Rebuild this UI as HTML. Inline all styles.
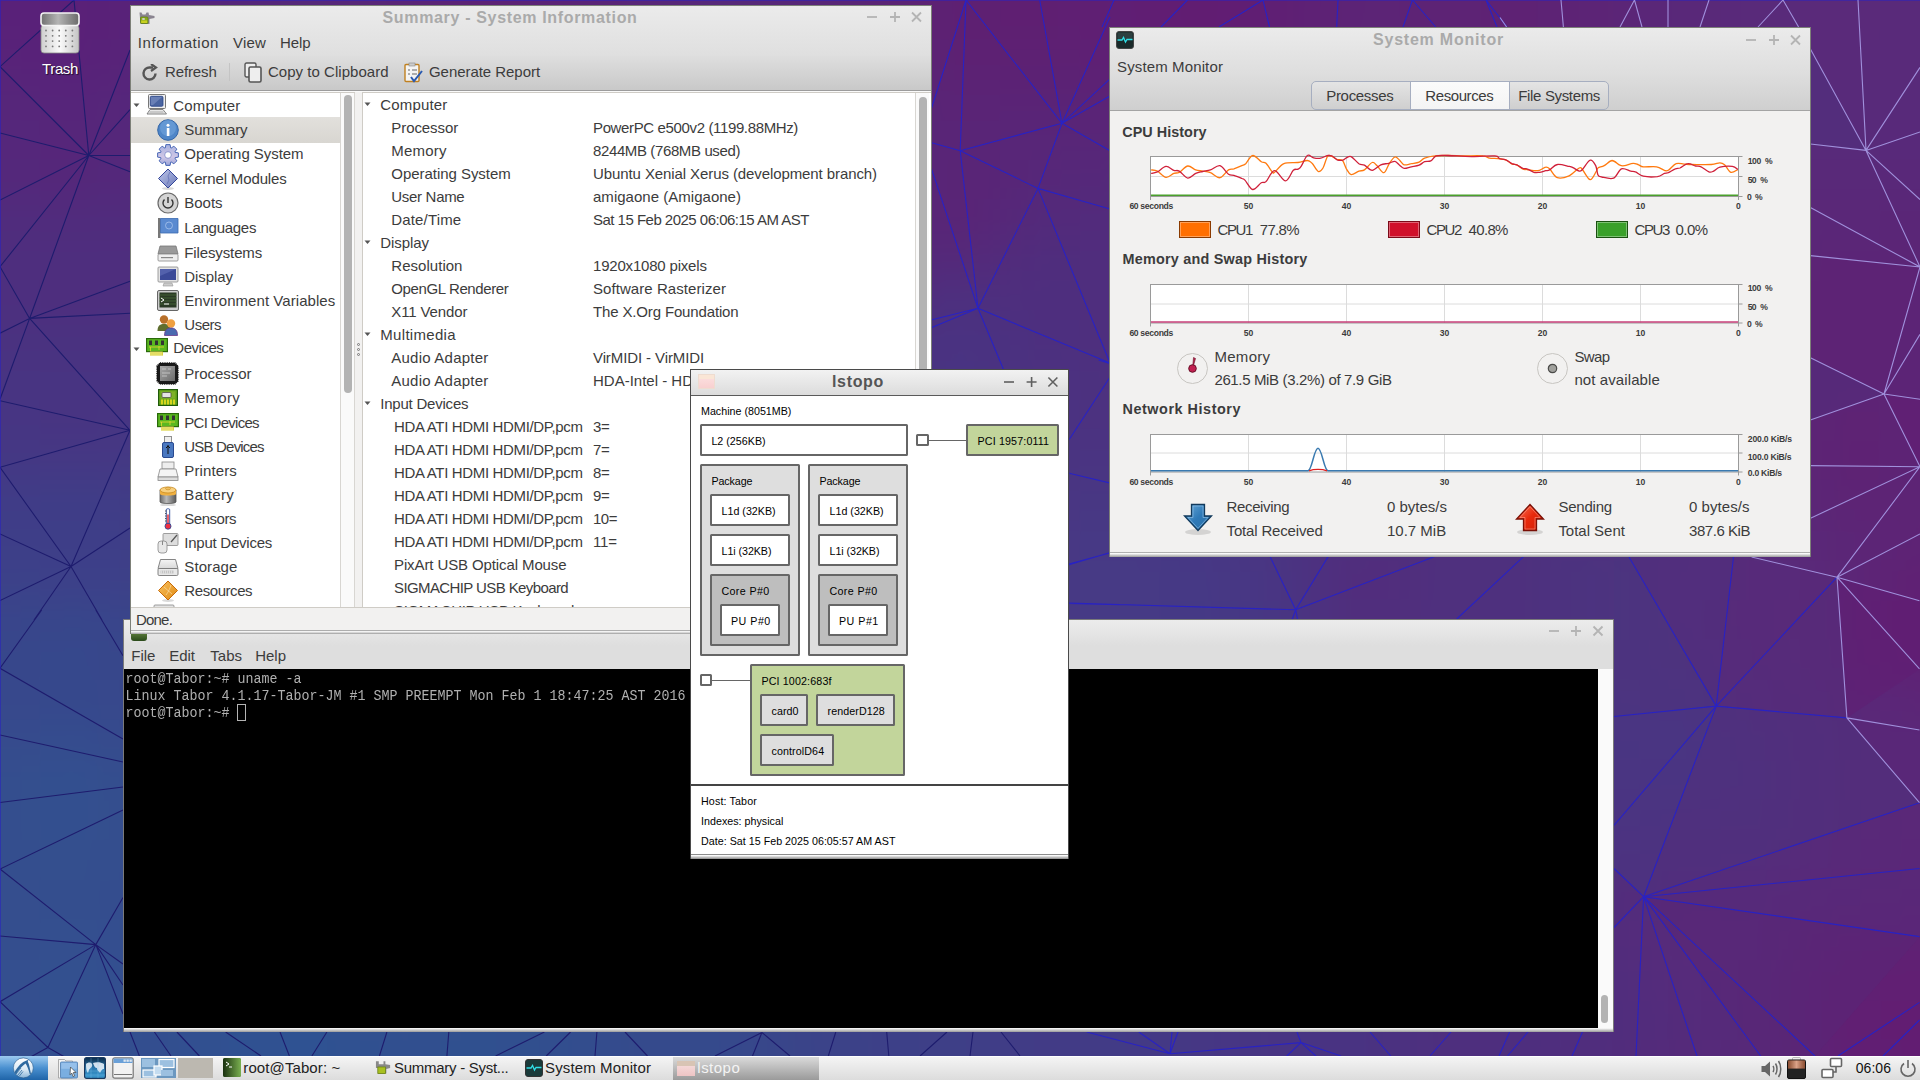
<!DOCTYPE html><html><head><meta charset="utf-8"><title>Desktop</title><style>*{margin:0;padding:0}
html,body{width:1920px;height:1080px;overflow:hidden;background:#3d3f86}
.a{position:absolute}
.t{position:absolute;white-space:nowrap}
</style></head><body><div class="a" style="left:-80px;top:-80px;width:2080px;height:1240px;filter:blur(18px)"><div style="position:absolute;left:0;top:0px;width:2080px;height:40px;background:linear-gradient(90deg,#55267a 0px,#582379 80px,#592279 160px,#57247a 240px,#55277b 320px,#56277a 400px,#592578 480px,#5b2376 560px,#5b2377 640px,#582678 720px,#562879 800px,#572778 880px,#5a2476 960px,#5d2173 1040px,#5e2073 1120px,#5e2074 1200px,#601e73 1280px,#5e2074 1360px,#5c2376 1440px,#5d2375 1520px,#5d2375 1600px,#5b2576 1680px,#592879 1760px,#592a7a 1840px,#5a2a7a 1920px,#592a7a 2000px,#592a7a 2080px)"></div><div style="position:absolute;left:0;top:40px;width:2080px;height:40px;background:linear-gradient(90deg,#56257a 0px,#592279 80px,#5a2178 160px,#572479 240px,#55277b 320px,#56277a 400px,#592478 480px,#5c2276 560px,#5b2376 640px,#582678 720px,#562879 800px,#572778 880px,#5b2376 960px,#5e2073 1040px,#5e2073 1120px,#5f1f73 1200px,#621c72 1280px,#5f1f74 1360px,#5c2376 1440px,#5d2375 1520px,#5e2274 1600px,#5c2476 1680px,#592879 1760px,#592a7a 1840px,#5a2a7a 1920px,#592a7a 2000px,#592a7a 2080px)"></div><div style="position:absolute;left:0;top:80px;width:2080px;height:40px;background:linear-gradient(90deg,#55267a 0px,#592179 80px,#5a2078 160px,#572479 240px,#55277b 320px,#55287a 400px,#592578 480px,#5c2276 560px,#5b2377 640px,#582679 720px,#56287a 800px,#572778 880px,#5a2476 960px,#5e2072 1040px,#5f1f72 1120px,#5f1f74 1200px,#621c72 1280px,#5f1f74 1360px,#5c2476 1440px,#5d2375 1520px,#5e2274 1600px,#5c2476 1680px,#592879 1760px,#592a7a 1840px,#5a2a7a 1920px,#592a7a 2000px,#592a7a 2080px)"></div><div style="position:absolute;left:0;top:120px;width:2080px;height:40px;background:linear-gradient(90deg,#55277b 0px,#582379 80px,#592179 160px,#56257a 240px,#54287b 320px,#54297b 400px,#582678 480px,#5b2377 560px,#5a2477 640px,#572779 720px,#55297a 800px,#562879 880px,#592576 960px,#5d2173 1040px,#5d2173 1120px,#5e2074 1200px,#611d73 1280px,#5e2075 1360px,#5b2477 1440px,#5d2375 1520px,#5d2374 1600px,#5b2576 1680px,#592879 1760px,#592a7a 1840px,#592a7a 1920px,#592a7a 2000px,#592a7a 2080px)"></div><div style="position:absolute;left:0;top:160px;width:2080px;height:40px;background:linear-gradient(90deg,#54287b 0px,#56267a 80px,#56257a 160px,#55277b 240px,#53297c 320px,#532a7b 400px,#56277a 480px,#592578 560px,#582678 640px,#55287a 720px,#542a7a 800px,#552879 880px,#582677 960px,#5a2476 1040px,#5a2376 1120px,#5b2376 1200px,#5d2175 1280px,#5b2376 1360px,#592678 1440px,#5b2576 1520px,#5c2476 1600px,#5a2677 1680px,#592979 1760px,#592a7a 1840px,#582a7a 1920px,#582a7a 2000px,#592979 2080px)"></div><div style="position:absolute;left:0;top:200px;width:2080px;height:40px;background:linear-gradient(90deg,#53297c 0px,#55277b 80px,#56267a 160px,#54287b 240px,#522a7c 320px,#522b7c 400px,#54297b 480px,#56287a 560px,#55287a 640px,#542a7b 720px,#532a7b 800px,#55297a 880px,#572678 960px,#592577 1040px,#582678 1120px,#582678 1200px,#592578 1280px,#582679 1360px,#572879 1440px,#592778 1520px,#592677 1600px,#592878 1680px,#582979 1760px,#582979 1840px,#582a7a 1920px,#58297a 2000px,#592979 2080px)"></div><div style="position:absolute;left:0;top:240px;width:2080px;height:40px;background:linear-gradient(90deg,#512b7d 0px,#54287b 80px,#55277a 160px,#522a7c 240px,#512c7d 320px,#512c7d 400px,#532a7b 480px,#54297b 560px,#54297b 640px,#532b7c 720px,#522b7c 800px,#542a7b 880px,#572778 960px,#5a2476 1040px,#562779 1120px,#54297a 1200px,#56287a 1280px,#56297a 1360px,#56297a 1440px,#57297a 1520px,#572879 1600px,#572979 1680px,#582979 1760px,#592979 1840px,#592979 1920px,#592879 2000px,#592879 2080px)"></div><div style="position:absolute;left:0;top:280px;width:2080px;height:40px;background:linear-gradient(90deg,#4f2d7e 0px,#502c7d 80px,#502c7d 160px,#502c7d 240px,#4f2d7e 320px,#502d7d 400px,#522b7c 480px,#54297b 560px,#542a7b 640px,#522c7c 720px,#512c7d 800px,#522b7b 880px,#562879 960px,#5a2476 1040px,#532a7b 1120px,#522b7c 1200px,#542a7b 1280px,#552a7c 1360px,#552a7b 1440px,#552a7b 1520px,#562a7a 1600px,#562a7a 1680px,#572979 1760px,#592879 1840px,#5a2778 1920px,#5a2677 2000px,#5a2778 2080px)"></div><div style="position:absolute;left:0;top:320px;width:2080px;height:40px;background:linear-gradient(90deg,#4e2f7f 0px,#4e2e7e 80px,#4e2e7e 160px,#4e2e7e 240px,#4e2f7e 320px,#4f2e7e 400px,#522b7c 480px,#55287a 560px,#54297b 640px,#512c7d 720px,#502d7d 800px,#512d7d 880px,#532a7b 960px,#55297a 1040px,#4f2d7d 1120px,#502d7d 1200px,#532b7c 1280px,#552a7c 1360px,#552a7c 1440px,#542b7b 1520px,#552b7b 1600px,#562a7a 1680px,#572979 1760px,#592778 1840px,#5b2577 1920px,#5b2576 2000px,#5a2678 2080px)"></div><div style="position:absolute;left:0;top:360px;width:2080px;height:40px;background:linear-gradient(90deg,#4c3080 0px,#4d2f7f 80px,#4e2e7e 160px,#4c307f 240px,#4c307f 320px,#4e2f7e 400px,#522b7c 480px,#55287a 560px,#54297b 640px,#502d7d 720px,#4e2f7e 800px,#4f2e7e 880px,#4f2e7d 960px,#4d307f 1040px,#4e2e7e 1120px,#4f2e7e 1200px,#522c7d 1280px,#552a7c 1360px,#542b7c 1440px,#532c7c 1520px,#542c7c 1600px,#552b7b 1680px,#572a7a 1760px,#592778 1840px,#5c2476 1920px,#5c2476 2000px,#5a2677 2080px)"></div><div style="position:absolute;left:0;top:400px;width:2080px;height:40px;background:linear-gradient(90deg,#4a3281 0px,#4a3280 80px,#4a3280 160px,#4a3280 240px,#4b3280 320px,#4d307f 400px,#512c7c 480px,#54297a 560px,#532a7b 640px,#4e2f7f 720px,#4c3080 800px,#4d307f 880px,#4d307f 960px,#493382 1040px,#4d2f7f 1120px,#4e2f7e 1200px,#512d7d 1280px,#542a7c 1360px,#542b7c 1440px,#522d7c 1520px,#532d7c 1600px,#542c7b 1680px,#562a7a 1760px,#592778 1840px,#5c2576 1920px,#5c2476 2000px,#5b2677 2080px)"></div><div style="position:absolute;left:0;top:440px;width:2080px;height:40px;background:linear-gradient(90deg,#483482 0px,#483482 80px,#483482 160px,#483482 240px,#493481 320px,#4b3280 400px,#4f2e7e 480px,#522b7c 560px,#512c7d 640px,#4c3180 720px,#4a3282 800px,#4b3180 880px,#4b3180 960px,#483482 1040px,#4b3280 1120px,#4d307f 1200px,#4f2f7e 1280px,#522c7d 1360px,#522d7d 1440px,#512d7d 1520px,#522e7d 1600px,#532d7c 1680px,#562b7a 1760px,#592778 1840px,#5c2476 1920px,#5c2476 2000px,#5b2677 2080px)"></div><div style="position:absolute;left:0;top:480px;width:2080px;height:40px;background:linear-gradient(90deg,#463683 0px,#473583 80px,#483482 160px,#473683 240px,#473683 320px,#493581 400px,#4c317f 480px,#4f2e7e 560px,#4d307f 640px,#493383 720px,#483484 800px,#4a3382 880px,#4b3281 960px,#493381 1040px,#4b3281 1120px,#4c3280 1200px,#4d3180 1280px,#502f7e 1360px,#502e7e 1440px,#502e7d 1520px,#512e7d 1600px,#522e7c 1680px,#552c7b 1760px,#592778 1840px,#5e2374 1920px,#5d2475 2000px,#5b2677 2080px)"></div><div style="position:absolute;left:0;top:520px;width:2080px;height:40px;background:linear-gradient(90deg,#443984 0px,#443884 80px,#453884 160px,#443984 240px,#453884 320px,#463783 400px,#493581 480px,#4b3280 560px,#4a3381 640px,#473484 720px,#463585 800px,#493483 880px,#4a3381 960px,#4a3381 1040px,#4a3481 1120px,#4a3482 1200px,#4b3381 1280px,#4d3180 1360px,#4f2f7e 1440px,#502f7e 1520px,#502f7d 1600px,#512f7d 1680px,#542d7b 1760px,#592878 1840px,#5e2274 1920px,#5d2375 2000px,#5b2577 2080px)"></div><div style="position:absolute;left:0;top:560px;width:2080px;height:40px;background:linear-gradient(90deg,#423b86 0px,#403c87 80px,#3f3d87 160px,#413c86 240px,#433b85 320px,#443a84 400px,#453883 480px,#473682 560px,#483583 640px,#463585 720px,#463585 800px,#483483 880px,#4a3382 960px,#4a3482 1040px,#493683 1120px,#483783 1200px,#493683 1280px,#4c3280 1360px,#4f2f7e 1440px,#4f2f7e 1520px,#4f307e 1600px,#50307e 1680px,#532f7c 1760px,#582a79 1840px,#5d2475 1920px,#5d2475 2000px,#5b2577 2080px)"></div><div style="position:absolute;left:0;top:600px;width:2080px;height:40px;background:linear-gradient(90deg,#3f3e87 0px,#3e3e88 80px,#3e3e88 160px,#3f3e87 240px,#413d86 320px,#413d86 400px,#423c85 480px,#443984 560px,#463684 640px,#463584 720px,#463585 800px,#483583 880px,#493482 960px,#493582 1040px,#483884 1120px,#473985 1200px,#473784 1280px,#4b3481 1360px,#502e7d 1440px,#4f2f7e 1520px,#4e307e 1600px,#4d327f 1680px,#52307d 1760px,#572c7a 1840px,#5b2677 1920px,#5e2375 2000px,#5c2576 2080px)"></div><div style="position:absolute;left:0;top:640px;width:2080px;height:40px;background:linear-gradient(90deg,#3e4088 0px,#3c4189 80px,#3d4089 160px,#3d4088 240px,#3f3f87 320px,#3f3f87 400px,#3f4087 480px,#413d86 560px,#453884 640px,#463684 720px,#463584 800px,#483583 880px,#493582 960px,#493683 1040px,#473984 1120px,#473a85 1200px,#463985 1280px,#493583 1360px,#522c7c 1440px,#4f307e 1520px,#4e307e 1600px,#4b3480 1680px,#54307c 1760px,#572c7b 1840px,#5b2778 1920px,#602073 2000px,#5d2476 2080px)"></div><div style="position:absolute;left:0;top:680px;width:2080px;height:40px;background:linear-gradient(90deg,#3c4289 0px,#39458b 80px,#37478b 160px,#3b438a 240px,#3d4188 320px,#3d4288 400px,#3c4388 480px,#3e4087 560px,#433b85 640px,#453784 720px,#463684 800px,#473683 880px,#483683 960px,#483783 1040px,#473984 1120px,#463a85 1200px,#453985 1280px,#483683 1360px,#512d7c 1440px,#4f307e 1520px,#4e307e 1600px,#4b3480 1680px,#54307c 1760px,#582b7a 1840px,#5b2778 1920px,#621e72 2000px,#5d2476 2080px)"></div><div style="position:absolute;left:0;top:720px;width:2080px;height:40px;background:linear-gradient(90deg,#3a448a 0px,#37478b 80px,#36488c 160px,#39458a 240px,#3c4389 320px,#3b4388 400px,#3a4589 480px,#3c4288 560px,#413d86 640px,#443985 720px,#463784 800px,#473783 880px,#483683 960px,#483783 1040px,#473884 1120px,#463985 1200px,#463884 1280px,#4a3482 1360px,#4f2f7e 1440px,#4f307e 1520px,#4e317e 1600px,#4d337f 1680px,#51317d 1760px,#572c7b 1840px,#5b2778 1920px,#602074 2000px,#5c2476 2080px)"></div><div style="position:absolute;left:0;top:760px;width:2080px;height:40px;background:linear-gradient(90deg,#39468b 0px,#37488c 80px,#36488c 160px,#38478b 240px,#3b4489 320px,#3b4489 400px,#3a4589 480px,#3b4388 560px,#403f87 640px,#433b85 720px,#453984 800px,#463884 880px,#473783 960px,#483783 1040px,#473884 1120px,#473884 1200px,#483783 1280px,#4a3482 1360px,#4d317f 1440px,#4e307f 1520px,#4e317f 1600px,#4d3380 1680px,#4f327f 1760px,#542d7c 1840px,#592979 1920px,#5c2577 2000px,#5b2677 2080px)"></div><div style="position:absolute;left:0;top:800px;width:2080px;height:40px;background:linear-gradient(90deg,#38488b 0px,#364b8d 80px,#354c8e 160px,#37498c 240px,#3a458a 320px,#3b4489 400px,#3a4589 480px,#3b4389 560px,#3f4087 640px,#413d86 720px,#433b85 800px,#453984 880px,#463884 960px,#473783 1040px,#483783 1120px,#483783 1200px,#483683 1280px,#4a3482 1360px,#4c3280 1440px,#4e317f 1520px,#4e317f 1600px,#4b3481 1680px,#4c3381 1760px,#512f7d 1840px,#582979 1920px,#5a2878 2000px,#5a2778 2080px)"></div><div style="position:absolute;left:0;top:840px;width:2080px;height:40px;background:linear-gradient(90deg,#37498c 0px,#344e8e 80px,#33508f 160px,#364b8d 240px,#39478b 320px,#3a4589 400px,#3a4589 480px,#3b4389 560px,#3e4188 640px,#403f87 720px,#423c86 800px,#433b85 880px,#453984 960px,#463884 1040px,#473783 1120px,#483683 1200px,#493582 1280px,#493482 1360px,#4b3381 1440px,#4d317f 1520px,#4e317f 1600px,#4c3381 1680px,#4d3280 1760px,#50307e 1840px,#592979 1920px,#5a2878 2000px,#592878 2080px)"></div><div style="position:absolute;left:0;top:880px;width:2080px;height:40px;background:linear-gradient(90deg,#374a8c 0px,#344e8e 80px,#33508f 160px,#364c8d 240px,#38488b 320px,#39468a 400px,#3a458a 480px,#3b4489 560px,#3c4389 640px,#3e4188 720px,#403e87 800px,#423c86 880px,#443a85 960px,#453984 1040px,#473783 1120px,#483683 1200px,#493482 1280px,#483483 1360px,#493382 1440px,#4d3180 1520px,#4f307f 1600px,#4e317f 1680px,#50307e 1760px,#512f7d 1840px,#582979 1920px,#5a2878 2000px,#592778 2080px)"></div><div style="position:absolute;left:0;top:920px;width:2080px;height:40px;background:linear-gradient(90deg,#374b8d 0px,#344e8e 80px,#344f8e 160px,#354c8d 240px,#37498c 320px,#38488b 400px,#39478b 480px,#39468a 560px,#3a458a 640px,#3c4389 720px,#3e4188 800px,#403e87 880px,#423c85 960px,#443a85 1040px,#463884 1120px,#473683 1200px,#483483 1280px,#483483 1360px,#493382 1440px,#4d3180 1520px,#4f2f7e 1600px,#502f7e 1680px,#532d7c 1760px,#542d7c 1840px,#582979 1920px,#5a2778 2000px,#5a2778 2080px)"></div><div style="position:absolute;left:0;top:960px;width:2080px;height:40px;background:linear-gradient(90deg,#364b8d 0px,#354e8e 80px,#344e8e 160px,#354c8e 240px,#354b8d 320px,#364b8d 400px,#36498c 480px,#37498c 560px,#38478b 640px,#3a458a 720px,#3b4389 800px,#3e4087 880px,#403d86 960px,#433b85 1040px,#453984 1120px,#463784 1200px,#483583 1280px,#483483 1360px,#4a3382 1440px,#4d307f 1520px,#4f2f7e 1600px,#512d7d 1680px,#562b7b 1760px,#562a7a 1840px,#5a2778 1920px,#5c2576 2000px,#5b2577 2080px)"></div><div style="position:absolute;left:0;top:1000px;width:2080px;height:40px;background:linear-gradient(90deg,#364c8d 0px,#344e8e 80px,#344f8f 160px,#344d8e 240px,#344d8f 320px,#334e8f 400px,#344c8e 480px,#344c8d 560px,#354a8c 640px,#38478b 720px,#39468a 800px,#3d4288 880px,#3f3f87 960px,#413c86 1040px,#443a85 1120px,#453884 1200px,#483583 1280px,#493482 1360px,#4a3381 1440px,#4d307f 1520px,#4f2e7e 1600px,#512d7d 1680px,#582a7a 1760px,#572a7a 1840px,#5d2375 1920px,#5f2174 2000px,#5d2376 2080px)"></div><div style="position:absolute;left:0;top:1040px;width:2080px;height:40px;background:linear-gradient(90deg,#364c8d 0px,#344f8f 80px,#33508f 160px,#344e8f 240px,#324f90 320px,#315091 400px,#334e8f 480px,#324e8e 560px,#334c8d 640px,#36498b 720px,#37488b 800px,#3b4389 880px,#3e4088 960px,#3f3e87 1040px,#433b86 1120px,#433a85 1200px,#473683 1280px,#483483 1360px,#4a3382 1440px,#4d2f7f 1520px,#4f2e7e 1600px,#4f2e7e 1680px,#562b7b 1760px,#572979 1840px,#602073 1920px,#611f73 2000px,#5e2275 2080px)"></div><div style="position:absolute;left:0;top:1080px;width:2080px;height:40px;background:linear-gradient(90deg,#364c8d 0px,#334f8f 80px,#33508f 160px,#334e8f 240px,#305191 320px,#2f5292 400px,#324f8f 480px,#30508f 560px,#324e8e 640px,#364a8c 720px,#354a8c 800px,#3b4489 880px,#3d4088 960px,#3e3f87 1040px,#423b86 1120px,#423b86 1200px,#463784 1280px,#483483 1360px,#493382 1440px,#4e2f7f 1520px,#4e2e7e 1600px,#4f2e7e 1680px,#542b7b 1760px,#572979 1840px,#611f73 1920px,#621e72 2000px,#5f2174 2080px)"></div><div style="position:absolute;left:0;top:1120px;width:2080px;height:40px;background:linear-gradient(90deg,#364c8d 0px,#344f8e 80px,#334f8f 160px,#334e8f 240px,#305191 320px,#2f5292 400px,#314f8f 480px,#30508f 560px,#324e8e 640px,#354a8c 720px,#354a8c 800px,#3a4489 880px,#3d4088 960px,#3e3f87 1040px,#423b86 1120px,#423b86 1200px,#463784 1280px,#483483 1360px,#493382 1440px,#4e2f7e 1520px,#4e2e7e 1600px,#502d7d 1680px,#552a7a 1760px,#572979 1840px,#602074 1920px,#621e72 2000px,#5f2174 2080px)"></div><div style="position:absolute;left:0;top:1160px;width:2080px;height:40px;background:linear-gradient(90deg,#364b8d 0px,#354e8e 80px,#344e8e 160px,#344e8f 240px,#315091 320px,#305191 400px,#324f8f 480px,#314f8f 560px,#324d8e 640px,#36498c 720px,#36498c 800px,#3b4389 880px,#3d4088 960px,#3f3e87 1040px,#423b86 1120px,#433a86 1200px,#463784 1280px,#483483 1360px,#4a3382 1440px,#4e2f7f 1520px,#4e2e7e 1600px,#512d7d 1680px,#542a7b 1760px,#572879 1840px,#5e2275 1920px,#611f73 2000px,#5e2274 2080px)"></div><div style="position:absolute;left:0;top:1200px;width:2080px;height:40px;background:linear-gradient(90deg,#374a8c 0px,#364c8d 80px,#354d8e 160px,#344d8e 240px,#324f90 320px,#314f90 400px,#334e8f 480px,#324d8e 560px,#344c8d 640px,#37498b 720px,#38478b 800px,#3b4389 880px,#3e4088 960px,#403e87 1040px,#433b85 1120px,#443985 1200px,#473683 1280px,#493482 1360px,#4b3281 1440px,#4e2f7f 1520px,#4f2e7e 1600px,#512c7c 1680px,#542b7b 1760px,#572879 1840px,#5c2476 1920px,#5f2174 2000px,#5d2375 2080px)"></div></div>
<svg class="a" style="left:0;top:0" width="1920" height="1080" viewBox="0 0 1920 1080"><path d="M1614.0 557.0L1629.0 557.0L1716.2 706.1L1614.0 716.5Z" fill="#4a3580" opacity=".55"/><path d="M1733.5 557.0L1837.0 577.2L1716.2 706.1Z" fill="#572a7a" opacity=".55"/><path d="M1629.0 557.0L1733.5 557.0L1716.2 706.1Z" fill="#502e7e" opacity=".55"/><path d="M1837.0 577.2L1920.0 600.8L1920.0 668.9L1846.9 717.9Z" fill="#611e72" opacity=".55"/><path d="M1716.2 706.1L1846.9 717.9L1920.0 802.7L1643.6 896.7Z" fill="#4f317e" opacity=".55"/><path d="M1614.0 716.5L1716.2 706.1L1643.6 896.7L1614.0 868.5Z" fill="#483683" opacity=".55"/><path d="M1846.9 717.9L1920.0 730.0L1920.0 802.7Z" fill="#5a2678" opacity=".55"/><path d="M1716.2 706.1L1837.0 577.2L1846.9 717.9Z" fill="#552c7a" opacity=".55"/><path d="M1643.6 896.7L1920.0 868.5L1920.0 936.6Z" fill="#572a7a" opacity=".55"/><path d="M1643.6 896.7L1920.0 936.6L1815.0 1056.0L1760.7 1056.0Z" fill="#5a2676" opacity=".55"/><path d="M1838.0 1056.0L1920.0 1002.4L1920.0 1056.0Z" fill="#621e72" opacity=".55"/><path d="M1810.4 49.0L1866.0 150.4L1810.4 144.0Z" fill="#50307e" opacity=".55"/><path d="M1810.4 255.6L1920.0 267.0L1884.0 394.0L1810.4 357.8Z" fill="#5e2274" opacity=".55"/><path d="M1810.4 357.8L1884.0 394.0L1810.4 420.0Z" fill="#522e7c" opacity=".55"/><path d="M1884.0 394.0L1920.0 399.3L1920.0 466.7Z" fill="#621e72" opacity=".55"/>
<path d="M88.8 155.5L0.0 66.7M88.8 155.5L0.0 133.0M88.8 155.5L0.0 200.0M88.8 155.5L0.0 266.7M88.8 155.5L29.6 318.5M88.8 155.5L74.0 0.0M88.8 155.5L130.0 109.6M88.8 155.5L130.0 50.0M88.8 155.5L130.0 155.5M88.8 155.5L130.0 171.8M0.0 66.7L74.0 0.0M29.6 318.4L0.0 266.7M29.6 318.4L0.0 333.2M29.6 318.4L0.0 399.2M29.6 318.4L130.0 430.3M29.6 318.4L130.0 313.3M29.6 318.4L130.0 281.3M0.0 400.7L130.0 430.3M130.0 430.3L0.0 467.3M41.7 610.0L0.0 668.3M95.8 610.0L123.0 655.8M0.0 668.3L123.0 739.0M0.0 735.0L123.0 762.0M0.0 802.5L123.0 787.0M0.0 869.0L123.0 810.0M95.8 944.6L0.0 869.0M95.8 944.6L0.0 936.0M95.8 944.6L0.0 1001.7M95.8 944.6L47.9 1047.5M95.8 944.6L123.0 897.5M95.8 944.6L123.0 964.0M95.8 944.6L123.0 985.0M95.8 944.6L123.0 1014.0M0.0 1001.7L47.9 1047.5M47.9 1047.5L25.0 1060.0M47.9 1047.5L70.0 1060.0M71.0 566.5L0.0 467.3M71.0 566.5L0.0 534.0M71.0 566.5L0.0 600.6M71.0 566.5L130.0 430.3M71.0 566.5L130.0 528.0M71.0 566.5L34.0 620.0M71.0 566.5L102.0 620.0M34.0 620.0L41.7 610.0M102.0 620.0L95.8 610.0M130.0 1032.0L139.4 1056.0M154.4 1032.0L171.0 1056.0M176.9 1032.0L199.4 1056.0M225.6 1032.0L261.0 1056.0M280.0 1032.0L289.4 1056.0M326.9 1032.0L311.9 1056.0M386.9 1032.0L379.4 1056.0M448.8 1032.0L446.9 1056.0M544.4 1032.0L495.6 1056.0M570.6 1032.0L546.2 1056.0M596.9 1032.0L595.0 1056.0M625.0 1032.0L647.5 1056.0M761.9 1032.5L715.0 1056.0M761.9 1032.5L752.5 1056.0M761.9 1032.5L790.0 1056.0M835.8 1032.0L828.3 1056.0M886.7 1032.0L888.8 1056.0M947.0 1032.0L920.0 1056.0M973.0 1032.0L970.0 1056.0M1001.0 1032.0L1020.0 1056.0" stroke="#1e1c6e" stroke-width="1.1" fill="none" opacity="1"/>
<path d="M0.0 0.0L1920.0 0.0M0.0 0.0L0.0 1080.0M966.0 0.0L1062.0 123.3M966.0 0.0L960.2 150.7M930.0 113.0L966.0 0.0M1039.7 0.0L1062.0 123.3M1110.0 17.0L1062.0 123.3M1062.0 123.3L1110.0 78.8M1062.0 123.3L1110.0 96.0M1062.0 123.3L1110.0 150.7M1062.0 123.3L960.2 150.7M1062.0 123.3L1038.0 188.4M960.2 150.7L930.0 142.2M960.2 150.7L1038.0 188.4M960.2 150.7L978.0 308.3M930.0 164.4L978.0 308.3M1038.0 188.4L978.0 308.3M1038.0 188.4L1110.0 209.0M1038.0 188.4L1110.0 363.0M978.0 308.3L930.0 320.3M978.0 308.3L930.0 328.2M978.0 308.3L1003.7 370.0M978.0 308.3L1110.0 363.0M1114.0 0.0L1102.0 27.0M1187.5 0.0L1161.0 27.0M1263.0 0.0L1219.0 27.0M1263.0 0.0L1269.5 27.0M1338.0 0.0L1336.7 27.0M1412.4 0.0L1403.0 27.0M1412.4 0.0L1435.8 27.0M1486.0 0.0L1497.0 27.0M1486.0 0.0L1507.0 27.0M1109.4 378.0L1069.2 439.5M1069.2 473.3L1109.4 482.9M1069.0 564.8L1109.4 552.8M1069.0 603.4L1120.0 604.6M1098.6 360.0L1109.4 363.6M1295.7 609.8L1270.0 556.4M1295.7 609.8L1328.3 556.4M1295.7 609.8L1434.8 556.4M1295.7 609.8L1068.8 603.0M1295.7 609.8L1292.0 620.0M1295.7 609.8L1297.7 620.0M1068.8 564.0L1109.6 553.0M1523.8 556.4L1456.7 619.0M1170.0 1053.8L1086.7 1032.0M1170.0 1053.8L1138.8 1032.0M1170.0 1053.8L1172.0 1032.0M1170.0 1053.8L1178.0 1032.0M1170.0 1053.8L1301.0 1042.6M1301.0 1042.6L1297.0 1032.0M1301.0 1042.6L1286.7 1056.0M1301.0 1042.6L1316.0 1056.0M1301.0 1042.6L1341.0 1056.0M1370.0 1032.0L1390.8 1056.0M1451.0 1032.0L1430.0 1056.0M1509.6 1032.0L1499.0 1056.0M1528.0 1032.0L1507.5 1056.0M1582.5 1032.0L1572.0 1056.0M1629.0 557.0L1716.2 706.1M1733.5 557.0L1716.2 706.1M1716.2 706.1L1614.0 716.5M1716.2 706.1L1614.0 825.4M1716.2 706.1L1643.6 896.7M1643.6 896.7L1614.0 868.5M1643.6 896.7L1614.0 927.5M1643.6 896.7L1636.0 1056.0M1643.6 896.7L1697.0 1056.0M1643.6 896.7L1760.7 1056.0M1716.2 706.1L1837.0 577.2M1643.6 896.7L1815.0 1056.0M1838.0 1056.0L1919.5 1002.4M1883.0 1056.0L1919.5 1020.0M1643.6 896.7L1919.5 802.7M1643.6 896.7L1919.5 868.5M1643.6 896.7L1919.5 936.6M1716.2 706.1L1846.9 717.9" stroke="#2822c4" stroke-width="1.1" fill="none" opacity="1"/>
<path d="M1561.0 0.0L1563.4 27.0M1634.5 0.0L1620.0 27.0M1634.5 0.0L1642.0 27.0M1668.0 0.0L1668.0 27.0M1709.0 0.0L1700.0 27.0M1783.0 0.0L1758.0 27.0M1783.0 0.0L1798.6 27.0M1858.0 0.0L1866.0 150.4M1866.0 150.4L1810.4 49.0M1866.0 150.4L1810.4 144.0M1866.0 150.4L1920.0 67.4M1866.0 150.4L1920.0 132.0M1866.0 150.4L1920.0 199.6M1866.0 150.4L1920.0 267.0M1810.4 207.4L1920.0 267.0M1810.4 255.6L1920.0 267.0M1920.0 267.0L1884.0 394.0M1884.0 394.0L1810.4 357.8M1884.0 394.0L1810.4 420.0M1884.0 394.0L1920.0 334.4M1884.0 394.0L1920.0 399.3M1884.0 394.0L1920.0 466.7M1920.0 466.7L1810.4 465.6M1920.0 466.7L1810.0 518.5M1920.0 466.7L1837.0 577.2M1920.0 534.0L1837.0 577.2M1500.0 17.5L1506.6 27.0M1751.6 557.0L1837.0 577.2M1837.0 577.2L1919.5 600.8M1837.0 577.2L1846.9 717.9M1837.0 577.2L1919.5 668.9M1846.9 717.9L1919.5 730.0M1846.9 717.9L1919.5 802.7" stroke="#a090dc" stroke-width="1.1" fill="none" opacity="1"/></svg>
<svg class="a" style="left:40px;top:12px" width="40" height="42" viewBox="0 0 40 42"><defs><linearGradient id="tl" x1="0" x2="1"><stop offset="0" stop-color="#707070"/><stop offset=".45" stop-color="#b4b4b4"/><stop offset="1" stop-color="#6a6a6a"/></linearGradient><linearGradient id="tb" x1="0" x2="1"><stop offset="0" stop-color="#cfcfcf"/><stop offset=".5" stop-color="#fafafa"/><stop offset="1" stop-color="#c4c4c4"/></linearGradient></defs><rect x="1" y="13" width="38" height="28" rx="3" fill="url(#tb)" stroke="#888" stroke-width=".8"/><rect x="1" y="1" width="38" height="12.5" rx="3" fill="url(#tl)" stroke="#f4f4f4" stroke-width="1.6"/><circle cx="6.0" cy="18.5" r="0.9" fill="#777"/><circle cx="6.0" cy="23.8" r="0.9" fill="#777"/><circle cx="6.0" cy="29.1" r="0.9" fill="#777"/><circle cx="6.0" cy="34.4" r="0.9" fill="#777"/><circle cx="12.6" cy="18.5" r="0.9" fill="#777"/><circle cx="12.6" cy="23.8" r="0.9" fill="#777"/><circle cx="12.6" cy="29.1" r="0.9" fill="#777"/><circle cx="12.6" cy="34.4" r="0.9" fill="#777"/><circle cx="19.2" cy="18.5" r="0.9" fill="#777"/><circle cx="19.2" cy="23.8" r="0.9" fill="#777"/><circle cx="19.2" cy="29.1" r="0.9" fill="#777"/><circle cx="19.2" cy="34.4" r="0.9" fill="#777"/><circle cx="25.799999999999997" cy="18.5" r="0.9" fill="#777"/><circle cx="25.799999999999997" cy="23.8" r="0.9" fill="#777"/><circle cx="25.799999999999997" cy="29.1" r="0.9" fill="#777"/><circle cx="25.799999999999997" cy="34.4" r="0.9" fill="#777"/><circle cx="32.4" cy="18.5" r="0.9" fill="#777"/><circle cx="32.4" cy="23.8" r="0.9" fill="#777"/><circle cx="32.4" cy="29.1" r="0.9" fill="#777"/><circle cx="32.4" cy="34.4" r="0.9" fill="#777"/></svg>
<div class="t" style="left:42.00px;top:61.05px;font:normal 15px/15px 'Liberation Sans', sans-serif;color:#ffffff;text-shadow:1px 1px 1px rgba(0,0,0,.7);letter-spacing:-0.357px;">Trash</div>
<div class="a" style="left:123px;top:619px;width:1491px;height:413px;background:#dcdcdc;border:1px solid #7a7a7a;box-sizing:border-box;"></div>
<div class="a" style="left:124px;top:620px;width:1489px;height:26px;background:linear-gradient(#ececec,#dedede);"></div>
<div class="a" style="left:124px;top:646px;width:1489px;height:23px;background:#dedede;"></div>
<svg class="a" style="left:1548px;top:625px" width="56" height="12">
<path d="M1 6H11" stroke="#b4b4b4" stroke-width="1.8"/>
<path d="M23 6H33M28 1V11" stroke="#b4b4b4" stroke-width="1.8"/>
<path d="M45.5 1.5L54.5 10.5M54.5 1.5L45.5 10.5" stroke="#b4b4b4" stroke-width="1.8"/>
</svg>
<div class="a" style="left:131px;top:633px;width:16px;height:8px;background:linear-gradient(#5a7a3a,#2a4a1a);border-radius:0 0 3px 3px;"></div>
<div class="t" style="left:131.30px;top:648.30px;font:normal 15px/15px 'Liberation Sans', sans-serif;color:#3c3c3c;">File</div>
<div class="t" style="left:169.20px;top:648.30px;font:normal 15px/15px 'Liberation Sans', sans-serif;color:#3c3c3c;">Edit</div>
<div class="t" style="left:210.30px;top:648.30px;font:normal 15px/15px 'Liberation Sans', sans-serif;color:#3c3c3c;">Tabs</div>
<div class="t" style="left:255.20px;top:648.30px;font:normal 15px/15px 'Liberation Sans', sans-serif;color:#3c3c3c;">Help</div>
<div class="a" style="left:124px;top:669px;width:1474px;height:359px;background:#000;"></div>
<div class="a" style="left:1598px;top:669px;width:15px;height:359px;background:#fafafa;"></div>
<div class="a" style="left:1601px;top:995px;width:7px;height:28px;background:#b3b3b3;border-radius:4px;"></div>
<div class="a" style="left:124px;top:1028px;width:1489px;height:4px;background:linear-gradient(#fff,#9a9a9a);"></div>
<div class="t" style="left:125.60px;top:672.79px;font:normal 13.33px/13.33px 'Liberation Mono', monospace;color:#b0b0b0;transform:scaleY(1.14);transform-origin:0 80%;">root@Tabor:~# uname -a</div>
<div class="t" style="left:125.60px;top:689.79px;font:normal 13.33px/13.33px 'Liberation Mono', monospace;color:#b0b0b0;transform:scaleY(1.14);transform-origin:0 80%;">Linux Tabor 4.1.17-Tabor-JM #1 SMP PREEMPT Mon Feb 1 18:47:25 AST 2016 ppc GNU/Linux</div>
<div class="t" style="left:125.60px;top:706.79px;font:normal 13.33px/13.33px 'Liberation Mono', monospace;color:#b0b0b0;transform:scaleY(1.14);transform-origin:0 80%;">root@Tabor:~# </div>
<div class="a" style="left:236.5px;top:703.5px;width:9px;height:17px;border:1px solid #b4b4b4;box-sizing:border-box;"></div>
<div class="a" style="left:130px;top:5px;width:802px;height:629px;background:#f2f1f0;border:1px solid #7d8078;box-sizing:border-box;"></div>
<div class="a" style="left:131px;top:6px;width:800px;height:54px;background:linear-gradient(#ebebeb,#dedede);"></div>
<div class="a" style="left:131px;top:56px;width:800px;height:35px;background:linear-gradient(#dedede,#c8c8c8);"></div>
<div class="a" style="left:131px;top:90px;width:800px;height:1px;background:#9c9c9c;"></div>
<div class="a" style="left:131px;top:91px;width:800px;height:1px;background:#fafafa;"></div>
<svg class="a" style="left:139px;top:11px" width="16" height="13" viewBox="0 0 16 13"><path d="M0.5 1.5h2l1 2h3l1-2h2l.5 2.5l5.5 1v2l-5 1v5h-9z" fill="#8a8490"/><rect x="1.5" y="6" width="7.5" height="6.5" rx="1" fill="#8aac18" stroke="#5a7a10" stroke-width=".7"/><rect x="2.2" y="9.5" width="6" height="2.5" fill="#c8d020"/><ellipse cx="4.5" cy="8" rx="1.6" ry="1" fill="#ccc"/></svg>
<div class="t" style="left:382.50px;top:10.25px;font:bold 16px/16px 'Liberation Sans', sans-serif;color:#aaaaaa;letter-spacing:0.661px;">Summary - System Information</div>
<svg class="a" style="left:866px;top:11.399999999999999px" width="56.5" height="12">
<path d="M1 6H11" stroke="#b4b4b4" stroke-width="1.8"/>
<path d="M24 6H34M29 1V11" stroke="#b4b4b4" stroke-width="1.8"/>
<path d="M46.0 1.5L55.0 10.5M55.0 1.5L46.0 10.5" stroke="#b4b4b4" stroke-width="1.8"/>
</svg>
<div class="t" style="left:137.80px;top:35.00px;font:normal 15px/15px 'Liberation Sans', sans-serif;color:#3c3c3c;letter-spacing:0.560px;">Information</div>
<div class="t" style="left:233.00px;top:35.00px;font:normal 15px/15px 'Liberation Sans', sans-serif;color:#3c3c3c;letter-spacing:0.190px;">View</div>
<div class="t" style="left:280.00px;top:35.00px;font:normal 15px/15px 'Liberation Sans', sans-serif;color:#3c3c3c;letter-spacing:-0.087px;">Help</div>
<svg class="a" style="left:141px;top:64px" width="18" height="19" viewBox="0 0 18 19"><path d="M14.5 9.5A6 6 0 1 1 9 3.5H12" fill="none" stroke="#555" stroke-width="2.4"/><path d="M10 0L15 3.5L10 7" fill="none" stroke="#555" stroke-width="2.2"/></svg>
<div class="t" style="left:165.00px;top:64.30px;font:normal 15px/15px 'Liberation Sans', sans-serif;color:#3c3c3c;letter-spacing:-0.117px;">Refresh</div>
<div class="a" style="left:229px;top:63px;width:1px;height:18px;background:#c4c4c4;"></div>
<svg class="a" style="left:244px;top:62px" width="19" height="21" viewBox="0 0 19 21"><rect x="1" y="1" width="11" height="14" rx="1.5" fill="#eee" stroke="#555" stroke-width="1.4"/><rect x="5" y="5" width="12" height="15" rx="1.5" fill="#eee" stroke="#555" stroke-width="1.6"/></svg>
<div class="t" style="left:268.00px;top:64.30px;font:normal 15px/15px 'Liberation Sans', sans-serif;color:#3c3c3c;letter-spacing:0.031px;">Copy to Clipboard</div>
<svg class="a" style="left:404px;top:62px" width="20" height="21" viewBox="0 0 20 21"><rect x="1" y="2.5" width="14" height="17" rx="1" fill="#f4f4f4" stroke="#c08020" stroke-width="1.4"/><rect x="5" y="1" width="6" height="3" fill="#ccc" stroke="#888" stroke-width=".6"/><path d="M4 8h2M4 12h2M8 8h5M8 12h5" stroke="#666" stroke-width="1"/><path d="M7 15l3 4l8-10" fill="none" stroke="#2a5ab0" stroke-width="2"/></svg>
<div class="t" style="left:429.00px;top:64.30px;font:normal 15px/15px 'Liberation Sans', sans-serif;color:#3c3c3c;letter-spacing:-0.049px;">Generate Report</div>
<div class="a" style="left:131px;top:92px;width:224px;height:515px;background:#fff;border-top:1px solid #cfccc6;box-sizing:border-box;"></div>
<div class="a" style="left:131px;top:117px;width:209px;height:26px;background:linear-gradient(#e2e0dc,#d8d6d1);"></div>
<div class="a" style="left:340px;top:93px;width:15px;height:514px;background:#fafafa;border-left:1px solid #d8d6d2;border-right:1px solid #d8d6d2;box-sizing:border-box;"></div>
<div class="a" style="left:343.5px;top:95px;width:8px;height:297.5px;background:#b3b3b3;border-radius:4px;"></div>
<svg class="a" style="left:133px;top:103px" width="7" height="5"><path d="M0.5 0.5H6.5L3.5 4z" fill="#555"/></svg>
<svg class="a" style="left:133px;top:347px" width="7" height="5"><path d="M0.5 0.5H6.5L3.5 4z" fill="#555"/></svg>
<svg class="a" style="left:146px;top:94px" width="22" height="22" viewBox="0 0 22 22">
<rect x="2.5" y="0.5" width="17" height="14" rx="1" fill="#eee" stroke="#777"/>
<rect x="4.3" y="2.3" width="12.7" height="10" rx="1.2" fill="#4a64a0" stroke="#2a4488" stroke-width=".8"/><path d="M5 3h11l-9 8H5z" fill="#8a9ccc" opacity=".5"/>
<path d="M4 15.5h13l3.5 4.5H1z" fill="#e8e8e8" stroke="#777" stroke-width=".9"/><path d="M3.5 18h14" stroke="#999" stroke-width=".8"/></svg>
<div class="t" style="left:173.30px;top:97.60px;font:normal 15px/15px 'Liberation Sans', sans-serif;color:#3c3c3c;letter-spacing:0.168px;">Computer</div>
<svg class="a" style="left:157px;top:119px" width="22" height="22" viewBox="0 0 22 22">
<circle cx="11" cy="11" r="10.3" fill="#4f86c8" stroke="#3466a8"/><circle cx="11" cy="9" r="8" fill="#7aaae0" opacity=".5"/>
<rect x="9.8" y="9" width="2.6" height="8" fill="#fff"/><circle cx="11" cy="6.3" r="1.5" fill="#fff"/></svg>
<div class="t" style="left:184.30px;top:121.60px;font:normal 15px/15px 'Liberation Sans', sans-serif;color:#3c3c3c;letter-spacing:-0.168px;">Summary</div>
<svg class="a" style="left:157px;top:144px" width="22" height="22" viewBox="0 0 22 22"><defs><linearGradient id="gg" x1="0" y1="0" x2="0" y2="1"><stop offset="0" stop-color="#aab4e0"/><stop offset=".6" stop-color="#cfc6e6"/><stop offset="1" stop-color="#9aa4d8"/></linearGradient></defs>
<path d="M18.11 8.32L21.39 8.89L21.39 13.11L18.11 13.68L17.92 14.14L19.84 16.86L16.86 19.84L14.14 17.92L13.68 18.11L13.11 21.39L8.89 21.39L8.32 18.11L7.86 17.92L5.14 19.84L2.16 16.86L4.08 14.14L3.89 13.68L0.61 13.11L0.61 8.89L3.89 8.32L4.08 7.86L2.16 5.14L5.14 2.16L7.86 4.08L8.32 3.89L8.89 0.61L13.11 0.61L13.68 3.89L14.14 4.08L16.86 2.16L19.84 5.14L17.92 7.86Z" fill="url(#gg)" stroke="#3a5ab0" stroke-width=".9" stroke-linejoin="round"/><circle cx="11" cy="11" r="3.3" fill="#fff" stroke="#5a6ab8" stroke-width=".6"/></svg>
<div class="t" style="left:184.30px;top:146.30px;font:normal 15px/15px 'Liberation Sans', sans-serif;color:#3c3c3c;letter-spacing:-0.053px;">Operating System</div>
<svg class="a" style="left:157px;top:168px" width="22" height="22" viewBox="0 0 22 22"><defs><linearGradient id="dg" x1="0" y1="0" x2="1" y2="1"><stop offset="0" stop-color="#c0c8ea"/><stop offset="1" stop-color="#6a78b8"/></linearGradient></defs>
<ellipse cx="11" cy="20.5" rx="6" ry="1.5" fill="#000" opacity=".15"/><path d="M11 1L20.5 10.5L11 20L1.5 10.5Z" fill="url(#dg)" stroke="#34469a" stroke-width="1"/><path d="M13 4L11 8L12 12L10 16" fill="none" stroke="#5a68b0" stroke-width=".8" opacity=".8"/></svg>
<div class="t" style="left:184.30px;top:171.00px;font:normal 15px/15px 'Liberation Sans', sans-serif;color:#3c3c3c;letter-spacing:-0.137px;">Kernel Modules</div>
<svg class="a" style="left:157px;top:192px" width="22" height="22" viewBox="0 0 22 22">
<circle cx="11" cy="11" r="10" fill="#d4d4d4" stroke="#6a6a6a" stroke-width="1.2"/>
<path d="M7.5 7.5A5 5 0 1 0 14.5 7.5" fill="none" stroke="#333" stroke-width="1.4"/><path d="M11 5v6" stroke="#333" stroke-width="1.4"/></svg>
<div class="t" style="left:184.30px;top:194.60px;font:normal 15px/15px 'Liberation Sans', sans-serif;color:#3c3c3c;letter-spacing:-0.031px;">Boots</div>
<svg class="a" style="left:157px;top:217px" width="22" height="22" viewBox="0 0 22 22">
<rect x="1" y="1" width="2.5" height="20" fill="#777"/><path d="M3.5 1.5H21V16H3.5z" fill="#5a8ad0" stroke="#3a6ab0" stroke-width=".8"/>
<circle cx="12" cy="8.5" r="3.5" fill="none" stroke="#a8c4ec" stroke-width=".8"/></svg>
<div class="t" style="left:184.30px;top:219.90px;font:normal 15px/15px 'Liberation Sans', sans-serif;color:#3c3c3c;letter-spacing:-0.260px;">Languages</div>
<svg class="a" style="left:157px;top:242px" width="22" height="22" viewBox="0 0 22 22">
<path d="M3 4h16l2 8H1z" fill="#9a9a9a" stroke="#777" stroke-width=".8"/><rect x="1" y="12" width="20" height="7" rx="1" fill="#eee" stroke="#888" stroke-width=".8"/>
<rect x="4" y="15" width="12" height="1.2" fill="#888"/></svg>
<div class="t" style="left:184.30px;top:244.50px;font:normal 15px/15px 'Liberation Sans', sans-serif;color:#3c3c3c;letter-spacing:-0.125px;">Filesystems</div>
<svg class="a" style="left:157px;top:266px" width="22" height="22" viewBox="0 0 22 22">
<rect x="1" y="1" width="20" height="15" rx="1" fill="#e4e4e4" stroke="#888" stroke-width=".8"/><rect x="3" y="3" width="16" height="11" fill="#3c4a98"/>
<path d="M3 3h16l-16 7z" fill="#6a78c0" opacity=".5"/><path d="M7 17h8l1 3H6z" fill="#ccc" stroke="#999" stroke-width=".6"/></svg>
<div class="t" style="left:184.30px;top:268.60px;font:normal 15px/15px 'Liberation Sans', sans-serif;color:#3c3c3c;letter-spacing:-0.083px;">Display</div>
<svg class="a" style="left:157px;top:290px" width="22" height="22" viewBox="0 0 22 22">
<rect x="0.5" y="0.5" width="21" height="20" rx="1.5" fill="#ccc" stroke="#666"/><rect x="2.5" y="2.5" width="17" height="15" fill="#2a3a24"/>
<path d="M2.5 5h17M2.5 8h17M2.5 11h17M2.5 14h17" stroke="#4a6a3a" stroke-width=".8"/>
<path d="M4 8l3 2l-3 2M7 14h5" stroke="#fff" stroke-width="1" fill="none"/></svg>
<div class="t" style="left:184.30px;top:292.70px;font:normal 15px/15px 'Liberation Sans', sans-serif;color:#3c3c3c;letter-spacing:0.057px;">Environment Variables</div>
<svg class="a" style="left:157px;top:314px" width="22" height="22" viewBox="0 0 22 22">
<circle cx="7" cy="5.5" r="4.2" fill="#b8702a"/><path d="M0.5 17c0-6 3-7 6.5-7s6.5 1 6.5 7z" fill="#5e6e2e"/>
<circle cx="14" cy="9.5" r="4.2" fill="#f0a040"/><path d="M7.5 21.5c0-6 3-7.5 6.5-7.5s6.5 1.5 6.5 7.5z" fill="#4a6ab0" stroke="#6a3a8a" stroke-width=".8"/></svg>
<div class="t" style="left:184.30px;top:316.70px;font:normal 15px/15px 'Liberation Sans', sans-serif;color:#3c3c3c;letter-spacing:-0.494px;">Users</div>
<svg class="a" style="left:146px;top:337px" width="22" height="22" viewBox="0 0 22 22">
<rect x="0.6" y="1.6" width="20.8" height="13" fill="#5ab820" stroke="#2a6a0a" stroke-width="1.2"/><rect x="3" y="3.5" width="3" height="4.5" fill="#333"/><rect x="9" y="3.5" width="3" height="4.5" fill="#333"/><rect x="15" y="3.5" width="3" height="4.5" fill="#333"/>
<path d="M3 10H18M4.5 10V14M13 9V13" stroke="#e8d830" stroke-width=".8" fill="none"/><rect x="4" y="14.6" width="13" height="4" fill="#d8d040"/><path d="M5 14.6v4M7 14.6v4M9 14.6v4M11 14.6v4M13 14.6v4M15 14.6v4" stroke="#f8f0a0" stroke-width=".8"/></svg>
<div class="t" style="left:173.30px;top:340.30px;font:normal 15px/15px 'Liberation Sans', sans-serif;color:#3c3c3c;letter-spacing:-0.479px;">Devices</div>
<svg class="a" style="left:156px;top:362px" width="23" height="23" viewBox="0 0 23 23"><defs><linearGradient id="cg" x1="0" y1="0" x2="1" y2="1"><stop offset="0" stop-color="#a8a8a8"/><stop offset="1" stop-color="#6a6a6a"/></linearGradient></defs>
<path d="M4 1H19L22 4V19L19 22H4L1 19V4Z" fill="#1a1a1a" stroke="#111" stroke-width="1.4" stroke-dasharray="1 .8"/><rect x="4" y="4" width="15" height="15" fill="url(#cg)"/><path d="M6 7h4M12 7h3M6 11h8M6 14h5" stroke="#cfcfcf" stroke-width="1" opacity=".8"/></svg>
<div class="t" style="left:184.30px;top:365.80px;font:normal 15px/15px 'Liberation Sans', sans-serif;color:#3c3c3c;letter-spacing:-0.047px;">Processor</div>
<svg class="a" style="left:158px;top:389px" width="20" height="17" viewBox="0 0 20 17">
<rect x="0.6" y="0.6" width="18.8" height="15.8" fill="#6aa81e" stroke="#1e5a0a" stroke-width="1.2"/><rect x="3" y="2.5" width="14" height="7" fill="#8ab830" opacity=".6"/>
<rect x="4" y="3.5" width="9" height="5" rx="1" fill="#e4e4e4" stroke="#444" stroke-width=".7"/><path d="M4 10.5v5M7 10.5v5M10 10.5v5M13 10.5v5M16 10.5v5" stroke="#f0e020" stroke-width="1.6"/></svg>
<div class="t" style="left:184.30px;top:389.90px;font:normal 15px/15px 'Liberation Sans', sans-serif;color:#3c3c3c;letter-spacing:0.238px;">Memory</div>
<svg class="a" style="left:157px;top:412px" width="22" height="22" viewBox="0 0 22 22">
<rect x="0.6" y="1.6" width="20.8" height="13" fill="#5ab820" stroke="#2a6a0a" stroke-width="1.2"/><rect x="3" y="3.5" width="3" height="4.5" fill="#333"/><rect x="9" y="3.5" width="3" height="4.5" fill="#333"/><rect x="15" y="3.5" width="3" height="4.5" fill="#333"/>
<path d="M3 10H18M4.5 10V14M13 9V13" stroke="#e8d830" stroke-width=".8" fill="none"/><rect x="4" y="14.6" width="13" height="4" fill="#d8d040"/><path d="M5 14.6v4M7 14.6v4M9 14.6v4M11 14.6v4M13 14.6v4M15 14.6v4" stroke="#f8f0a0" stroke-width=".8"/></svg>
<div class="t" style="left:184.30px;top:415.20px;font:normal 15px/15px 'Liberation Sans', sans-serif;color:#3c3c3c;letter-spacing:-0.729px;">PCI Devices</div>
<svg class="a" style="left:157px;top:436px" width="22" height="22" viewBox="0 0 22 22">
<rect x="7.5" y="0.5" width="7" height="6" fill="#eee" stroke="#777" stroke-width=".8"/><rect x="5.5" y="6.5" width="11" height="15" rx="1.5" fill="#4a78c0" stroke="#2a4a90"/>
<path d="M11 9v9M9 12l2-2l2 2" stroke="#111" stroke-width="1" fill="none"/></svg>
<div class="t" style="left:184.30px;top:439.00px;font:normal 15px/15px 'Liberation Sans', sans-serif;color:#3c3c3c;letter-spacing:-0.805px;">USB Devices</div>
<svg class="a" style="left:157px;top:460px" width="22" height="22" viewBox="0 0 22 22">
<rect x="5" y="2" width="12" height="7" fill="#eee" stroke="#888" stroke-width=".8"/><path d="M1 17l2-8h16l2 8z" fill="#f4f4f4" stroke="#888" stroke-width=".8"/>
<rect x="1" y="17" width="20" height="3.5" fill="#ddd" stroke="#888" stroke-width=".8"/></svg>
<div class="t" style="left:184.30px;top:462.90px;font:normal 15px/15px 'Liberation Sans', sans-serif;color:#3c3c3c;letter-spacing:0.128px;">Printers</div>
<svg class="a" style="left:157px;top:484px" width="22" height="22" viewBox="0 0 22 22"><defs><linearGradient id="bb" x1="0" x2="1"><stop offset="0" stop-color="#6a6a6a"/><stop offset=".4" stop-color="#b8b8b8"/><stop offset="1" stop-color="#5a5a5a"/></linearGradient></defs>
<ellipse cx="11" cy="21" rx="8" ry="1.3" fill="#000" opacity=".15"/><path d="M3 6V18C3 20 19 20 19 18V6Z" fill="url(#bb)" stroke="#555" stroke-width=".8"/><path d="M3 6V10C3 12 19 12 19 10V6Z" fill="#f0b040"/><ellipse cx="11" cy="6" rx="8" ry="3" fill="#f8d080" stroke="#c88a20" stroke-width=".8"/><ellipse cx="11" cy="4.5" rx="2.5" ry="1.3" fill="#f0c060" stroke="#c88a20" stroke-width=".6"/></svg>
<div class="t" style="left:184.30px;top:487.00px;font:normal 15px/15px 'Liberation Sans', sans-serif;color:#3c3c3c;letter-spacing:0.326px;">Battery</div>
<svg class="a" style="left:157px;top:508px" width="22" height="22" viewBox="0 0 22 22">
<rect x="9.3" y="0.8" width="3.4" height="15.5" rx="1" fill="#fff" stroke="#2a4a98" stroke-width=".9"/><path d="M8 3h1.3M8 5.5h1.3M8 8h1.3M8 10.5h1.3M8 13h1.3" stroke="#222" stroke-width=".7"/><rect x="10.3" y="6.5" width="1.4" height="10" fill="#e02030"/><circle cx="11" cy="18.2" r="3" fill="#f03040" stroke="#2a4a98" stroke-width=".9"/></svg>
<div class="t" style="left:184.30px;top:510.90px;font:normal 15px/15px 'Liberation Sans', sans-serif;color:#3c3c3c;letter-spacing:-0.475px;">Sensors</div>
<svg class="a" style="left:157px;top:532px" width="22" height="22" viewBox="0 0 22 22">
<rect x="6" y="1.5" width="15" height="12" rx="1" fill="#ddd" stroke="#888" stroke-width=".8"/><path d="M14 10l6-7" stroke="#555" stroke-width="1.2"/>
<rect x="1" y="9" width="9" height="12" rx="3" fill="#e8e8e8" stroke="#888" stroke-width=".8"/><path d="M5.5 9v4" stroke="#888"/></svg>
<div class="t" style="left:184.30px;top:534.80px;font:normal 15px/15px 'Liberation Sans', sans-serif;color:#3c3c3c;letter-spacing:-0.245px;">Input Devices</div>
<svg class="a" style="left:157px;top:556px" width="22" height="22" viewBox="0 0 22 22"><defs><linearGradient id="hg" x1="0" y1="0" x2="0" y2="1"><stop offset="0" stop-color="#f4f4f4"/><stop offset="1" stop-color="#d8d8d8"/></linearGradient></defs>
<path d="M3.5 3.5h15l2.5 9H1z" fill="url(#hg)" stroke="#777" stroke-width=".9"/><rect x="1" y="12.5" width="20" height="7" rx="1.2" fill="#e8e8e8" stroke="#777" stroke-width=".9"/><rect x="3.5" y="14.5" width="13" height="3" fill="#c4c4c4"/><path d="M4.5 14.5v3M6.5 14.5v3M8.5 14.5v3M10.5 14.5v3M12.5 14.5v3M14.5 14.5v3" stroke="#eee" stroke-width=".6"/></svg>
<div class="t" style="left:184.30px;top:558.90px;font:normal 15px/15px 'Liberation Sans', sans-serif;color:#3c3c3c;letter-spacing:0.080px;">Storage</div>
<svg class="a" style="left:157px;top:580px" width="22" height="22" viewBox="0 0 22 22"><defs><linearGradient id="rsg" x1="0" y1="0" x2="1" y2="1"><stop offset="0" stop-color="#f8c060"/><stop offset="1" stop-color="#e08a10"/></linearGradient></defs>
<ellipse cx="11" cy="20.5" rx="6" ry="1.5" fill="#000" opacity=".15"/><path d="M11 1L20.5 10.5L11 20L1.5 10.5Z" fill="url(#rsg)" stroke="#c86a08" stroke-width="1"/><path d="M7 7c3 2 5 5 8 7M14 5c-1 3-2 6-5 10" fill="none" stroke="#fbe0b0" stroke-width=".8" opacity=".8"/></svg>
<div class="t" style="left:184.30px;top:582.80px;font:normal 15px/15px 'Liberation Sans', sans-serif;color:#3c3c3c;letter-spacing:-0.422px;">Resources</div>
<div class="a" style="left:150px;top:600px;width:30px;height:7px;overflow:hidden"><svg class="a" style="left:3px;top:4px" width="22" height="22" viewBox="0 0 22 22">
<rect x="1" y="1" width="20" height="15" rx="1" fill="#e4e4e4" stroke="#888" stroke-width=".8"/><rect x="3" y="3" width="16" height="11" fill="#3c4a98"/>
<path d="M3 3h16l-16 7z" fill="#6a78c0" opacity=".5"/><path d="M7 17h8l1 3H6z" fill="#ccc" stroke="#999" stroke-width=".6"/></svg></div>
<div class="a" style="left:355px;top:92px;width:7px;height:515px;background:#f2f1f0;"></div>
<div class="a" style="left:357px;top:343px;width:3px;height:3px;border:1px solid #777;border-radius:2px;box-sizing:border-box;"></div>
<div class="a" style="left:357px;top:348px;width:3px;height:3px;border:1px solid #777;border-radius:2px;box-sizing:border-box;"></div>
<div class="a" style="left:357px;top:353px;width:3px;height:3px;border:1px solid #777;border-radius:2px;box-sizing:border-box;"></div>
<div class="a" style="left:362px;top:92px;width:569px;height:515px;background:#fff;border-top:1px solid #cfccc6;border-left:1px solid #cfccc6;box-sizing:border-box;"></div>
<div class="a" style="left:915px;top:93px;width:14px;height:514px;background:#fafafa;border-left:1px solid #d8d6d2;box-sizing:border-box;"></div>
<div class="a" style="left:918.5px;top:96.5px;width:8px;height:276px;background:#b3b3b3;border-radius:4px;"></div>
<svg class="a" style="left:364px;top:102px" width="7" height="5"><path d="M0.5 0.5H6.5L3.5 4z" fill="#555"/></svg>
<div class="t" style="left:380.30px;top:97.30px;font:normal 15px/15px 'Liberation Sans', sans-serif;color:#3c3c3c;letter-spacing:0.168px;">Computer</div>
<div class="t" style="left:391.30px;top:120.30px;font:normal 15px/15px 'Liberation Sans', sans-serif;color:#3c3c3c;letter-spacing:-0.080px;">Processor</div>
<div class="t" style="left:593.00px;top:120.30px;font:normal 15px/15px 'Liberation Sans', sans-serif;color:#3c3c3c;letter-spacing:-0.364px;">PowerPC e500v2 (1199.88MHz)</div>
<div class="t" style="left:391.30px;top:143.30px;font:normal 15px/15px 'Liberation Sans', sans-serif;color:#3c3c3c;letter-spacing:0.205px;">Memory</div>
<div class="t" style="left:593.00px;top:143.30px;font:normal 15px/15px 'Liberation Sans', sans-serif;color:#3c3c3c;letter-spacing:-0.381px;">8244MB (768MB used)</div>
<div class="t" style="left:391.30px;top:166.30px;font:normal 15px/15px 'Liberation Sans', sans-serif;color:#3c3c3c;letter-spacing:-0.041px;">Operating System</div>
<div class="t" style="left:593.00px;top:166.30px;font:normal 15px/15px 'Liberation Sans', sans-serif;color:#3c3c3c;letter-spacing:-0.092px;">Ubuntu Xenial Xerus (development branch)</div>
<div class="t" style="left:391.30px;top:189.30px;font:normal 15px/15px 'Liberation Sans', sans-serif;color:#3c3c3c;letter-spacing:-0.306px;">User Name</div>
<div class="t" style="left:593.00px;top:189.30px;font:normal 15px/15px 'Liberation Sans', sans-serif;color:#3c3c3c;letter-spacing:0.022px;">amigaone (Amigaone)</div>
<div class="t" style="left:391.30px;top:212.30px;font:normal 15px/15px 'Liberation Sans', sans-serif;color:#3c3c3c;letter-spacing:0.152px;">Date/Time</div>
<div class="t" style="left:593.00px;top:212.30px;font:normal 15px/15px 'Liberation Sans', sans-serif;color:#3c3c3c;letter-spacing:-0.516px;">Sat 15 Feb 2025 06:06:15 AM AST</div>
<svg class="a" style="left:364px;top:240px" width="7" height="5"><path d="M0.5 0.5H6.5L3.5 4z" fill="#555"/></svg>
<div class="t" style="left:380.30px;top:235.30px;font:normal 15px/15px 'Liberation Sans', sans-serif;color:#3c3c3c;letter-spacing:-0.083px;">Display</div>
<div class="t" style="left:391.30px;top:258.30px;font:normal 15px/15px 'Liberation Sans', sans-serif;color:#3c3c3c;letter-spacing:0.032px;">Resolution</div>
<div class="t" style="left:593.00px;top:258.30px;font:normal 15px/15px 'Liberation Sans', sans-serif;color:#3c3c3c;letter-spacing:-0.191px;">1920x1080 pixels</div>
<div class="t" style="left:391.30px;top:281.30px;font:normal 15px/15px 'Liberation Sans', sans-serif;color:#3c3c3c;letter-spacing:-0.380px;">OpenGL Renderer</div>
<div class="t" style="left:593.00px;top:281.30px;font:normal 15px/15px 'Liberation Sans', sans-serif;color:#3c3c3c;letter-spacing:0.068px;">Software Rasterizer</div>
<div class="t" style="left:391.30px;top:304.30px;font:normal 15px/15px 'Liberation Sans', sans-serif;color:#3c3c3c;letter-spacing:-0.129px;">X11 Vendor</div>
<div class="t" style="left:593.00px;top:304.30px;font:normal 15px/15px 'Liberation Sans', sans-serif;color:#3c3c3c;letter-spacing:-0.146px;">The X.Org Foundation</div>
<svg class="a" style="left:364px;top:332px" width="7" height="5"><path d="M0.5 0.5H6.5L3.5 4z" fill="#555"/></svg>
<div class="t" style="left:380.30px;top:327.30px;font:normal 15px/15px 'Liberation Sans', sans-serif;color:#3c3c3c;letter-spacing:0.308px;">Multimedia</div>
<div class="t" style="left:391.30px;top:350.30px;font:normal 15px/15px 'Liberation Sans', sans-serif;color:#3c3c3c;letter-spacing:0.226px;">Audio Adapter</div>
<div class="t" style="left:593.00px;top:350.30px;font:normal 15px/15px 'Liberation Sans', sans-serif;color:#3c3c3c;letter-spacing:-0.099px;">VirMIDI - VirMIDI</div>
<div class="t" style="left:391.30px;top:373.30px;font:normal 15px/15px 'Liberation Sans', sans-serif;color:#3c3c3c;letter-spacing:0.226px;">Audio Adapter</div>
<div class="t" style="left:593.00px;top:373.30px;font:normal 15px/15px 'Liberation Sans', sans-serif;color:#3c3c3c;">HDA-Intel - HDA ATI HDMI</div>
<svg class="a" style="left:364px;top:401px" width="7" height="5"><path d="M0.5 0.5H6.5L3.5 4z" fill="#555"/></svg>
<div class="t" style="left:380.30px;top:396.30px;font:normal 15px/15px 'Liberation Sans', sans-serif;color:#3c3c3c;letter-spacing:-0.221px;">Input Devices</div>
<div class="t" style="left:394.00px;top:419.30px;font:normal 15px/15px 'Liberation Sans', sans-serif;color:#3c3c3c;letter-spacing:-0.347px;">HDA ATI HDMI HDMI/DP,pcm</div>
<div class="t" style="left:593.00px;top:419.30px;font:normal 15px/15px 'Liberation Sans', sans-serif;color:#3c3c3c;letter-spacing:-0.401px;">3=</div>
<div class="t" style="left:394.00px;top:442.30px;font:normal 15px/15px 'Liberation Sans', sans-serif;color:#3c3c3c;letter-spacing:-0.347px;">HDA ATI HDMI HDMI/DP,pcm</div>
<div class="t" style="left:593.00px;top:442.30px;font:normal 15px/15px 'Liberation Sans', sans-serif;color:#3c3c3c;letter-spacing:-0.401px;">7=</div>
<div class="t" style="left:394.00px;top:465.30px;font:normal 15px/15px 'Liberation Sans', sans-serif;color:#3c3c3c;letter-spacing:-0.347px;">HDA ATI HDMI HDMI/DP,pcm</div>
<div class="t" style="left:593.00px;top:465.30px;font:normal 15px/15px 'Liberation Sans', sans-serif;color:#3c3c3c;letter-spacing:-0.401px;">8=</div>
<div class="t" style="left:394.00px;top:488.30px;font:normal 15px/15px 'Liberation Sans', sans-serif;color:#3c3c3c;letter-spacing:-0.347px;">HDA ATI HDMI HDMI/DP,pcm</div>
<div class="t" style="left:593.00px;top:488.30px;font:normal 15px/15px 'Liberation Sans', sans-serif;color:#3c3c3c;letter-spacing:-0.401px;">9=</div>
<div class="t" style="left:394.00px;top:511.30px;font:normal 15px/15px 'Liberation Sans', sans-serif;color:#3c3c3c;letter-spacing:-0.347px;">HDA ATI HDMI HDMI/DP,pcm</div>
<div class="t" style="left:593.00px;top:511.30px;font:normal 15px/15px 'Liberation Sans', sans-serif;color:#3c3c3c;letter-spacing:-0.481px;">10=</div>
<div class="t" style="left:394.00px;top:534.30px;font:normal 15px/15px 'Liberation Sans', sans-serif;color:#3c3c3c;letter-spacing:-0.347px;">HDA ATI HDMI HDMI/DP,pcm</div>
<div class="t" style="left:593.00px;top:534.30px;font:normal 15px/15px 'Liberation Sans', sans-serif;color:#3c3c3c;letter-spacing:-0.110px;">11=</div>
<div class="t" style="left:394.00px;top:557.30px;font:normal 15px/15px 'Liberation Sans', sans-serif;color:#3c3c3c;letter-spacing:-0.107px;">PixArt USB Optical Mouse</div>
<div class="t" style="left:394.00px;top:580.30px;font:normal 15px/15px 'Liberation Sans', sans-serif;color:#3c3c3c;letter-spacing:-0.603px;">SIGMACHIP USB Keyboard</div>
<div class="a" style="left:363px;top:598px;width:552px;height:9px;overflow:hidden"><div class="t" style="left:31px;top:5.3px;font:normal 15px/15px 'Liberation Sans', sans-serif;color:#3c3c3c;letter-spacing:-0.33px">SIGMACHIP USB Keyboard</div></div>
<div class="a" style="left:363px;top:607px;width:552px;height:1px;background:#cfccc6"></div>
<div class="a" style="left:131px;top:607px;width:800px;height:1px;background:#cfccc6;"></div>
<div class="t" style="left:136.00px;top:611.90px;font:normal 15px/15px 'Liberation Sans', sans-serif;color:#3c3c3c;letter-spacing:-0.805px;">Done.</div>
<div class="a" style="left:131px;top:630px;width:800px;height:4px;background:linear-gradient(#8a8a8a,#fafafa 40%,#9a9a9a);"></div>
<div class="a" style="left:1109px;top:27px;width:702px;height:530px;background:#f2f1f0;border:1px solid #7d8078;box-sizing:border-box;"></div>
<div class="a" style="left:1110px;top:28px;width:700px;height:82px;background:linear-gradient(#ebebeb,#dedede 55%,#cfcfcf);"></div>
<div class="a" style="left:1110px;top:109.5px;width:700px;height:1px;background:#a4a4a4;"></div>
<svg class="a" style="left:1116px;top:31px" width="18" height="18" viewBox="0 0 18 18"><rect x="0.5" y="0.5" width="17" height="17" rx="2.5" fill="#1a2a2a" stroke="#444"/><rect x="1.5" y="1.5" width="15" height="7" rx="1.5" fill="#3a5050" opacity=".6"/><path d="M1.5 9H6L7.5 6.5L9.5 11L11 8.5H16.5" fill="none" stroke="#30e0e8" stroke-width="1.3"/></svg>
<div class="t" style="left:1373.00px;top:32.45px;font:bold 16px/16px 'Liberation Sans', sans-serif;color:#aaaaaa;letter-spacing:0.785px;">System Monitor</div>
<svg class="a" style="left:1745px;top:33.5px" width="56.5" height="12">
<path d="M1 6H11" stroke="#b4b4b4" stroke-width="1.8"/>
<path d="M24 6H34M29 1V11" stroke="#b4b4b4" stroke-width="1.8"/>
<path d="M46.0 1.5L55.0 10.5M55.0 1.5L46.0 10.5" stroke="#b4b4b4" stroke-width="1.8"/>
</svg>
<div class="t" style="left:1117.00px;top:59.30px;font:normal 15px/15px 'Liberation Sans', sans-serif;color:#3c3c3c;letter-spacing:0.129px;">System Monitor</div>
<div class="a" style="left:1311px;top:81px;width:298px;height:29px;border:1px solid #a6aec0;border-radius:5px;box-sizing:border-box;background:linear-gradient(#e4e4e4,#cfcfcf);"></div>
<div class="a" style="left:1409.5px;top:82px;width:100px;height:27px;background:linear-gradient(#fbfbfb,#f4f4f4);border-left:1px solid #a6aec0;border-right:1px solid #a6aec0;box-sizing:border-box;"></div>
<div class="t" style="left:1326.30px;top:88.10px;font:normal 15px/15px 'Liberation Sans', sans-serif;color:#3c3c3c;letter-spacing:-0.336px;">Processes</div>
<div class="t" style="left:1425.30px;top:88.10px;font:normal 15px/15px 'Liberation Sans', sans-serif;color:#3c3c3c;letter-spacing:-0.411px;">Resources</div>
<div class="t" style="left:1518.30px;top:88.10px;font:normal 15px/15px 'Liberation Sans', sans-serif;color:#3c3c3c;letter-spacing:-0.346px;">File Systems</div>
<div class="t" style="left:1122.30px;top:125.01px;font:bold 14.4px/14.4px 'Liberation Sans', sans-serif;color:#3c3c3c;letter-spacing:0.031px;">CPU History</div>
<svg class="a" style="left:1140px;top:151px" width="620" height="65" viewBox="1140 151 620 65"><rect x="1150.5" y="156.5" width="588.0" height="40" fill="#fff"/><path d="M1248.5 156V196.5" stroke="#dcdcdc" stroke-width="1"/><path d="M1346.5 156V196.5" stroke="#dcdcdc" stroke-width="1"/><path d="M1444.5 156V196.5" stroke="#dcdcdc" stroke-width="1"/><path d="M1542.5 156V196.5" stroke="#dcdcdc" stroke-width="1"/><path d="M1640.5 156V196.5" stroke="#dcdcdc" stroke-width="1"/><path d="M1150.5 176.5H1738.5" stroke="#dcdcdc" stroke-width="1"/><path d="M1150.5 156.5H1742.5M1150.5 156V200M1738.5 156V200M1150.5 196.5H1742.5M1738.5 176.5H1742.5" stroke="#9a9a9a" stroke-width="1" fill="none"/><clipPath id="cc"><rect x="1151" y="150" width="587" height="46"/></clipPath><g clip-path="url(#cc)"><path d="M1151 195.5H1738" stroke="#4aa02c" stroke-width="2"/><path d="M1151.1 169.9 C1152.2 170.1 1154.9 169.9 1157.4 171.1 C1159.8 172.3 1163.2 177.0 1166.0 177.3 C1168.7 177.7 1171.6 174.3 1173.8 173.4 C1176.0 172.6 1176.9 173.5 1179.2 172.3 C1181.6 171.0 1185.1 166.4 1187.8 166.0 C1190.6 165.6 1193.2 169.1 1195.7 169.9 C1198.1 170.8 1200.2 170.6 1202.7 171.1 C1205.2 171.5 1207.6 171.5 1210.5 172.7 C1213.4 173.8 1216.9 178.2 1219.9 177.7 C1222.9 177.3 1226.1 171.4 1228.5 169.9 C1230.8 168.4 1231.7 169.5 1233.9 168.8 C1236.2 168.0 1239.8 166.5 1241.8 165.6 C1243.7 164.8 1243.8 165.4 1245.7 163.7 C1247.5 162.0 1250.1 155.8 1252.7 155.5 C1255.3 155.1 1259.1 160.4 1261.3 161.7 C1263.5 163.0 1264.1 161.6 1266.0 163.3 C1267.8 165.0 1270.8 170.4 1272.2 171.9 C1273.7 173.4 1272.6 173.6 1274.6 172.3 C1276.5 170.9 1280.0 165.3 1283.9 163.7 C1287.8 162.0 1294.1 163.0 1298.0 162.5 C1301.9 162.0 1305.0 160.4 1307.4 160.5 C1309.7 160.7 1310.2 161.5 1312.1 163.3 C1313.9 165.1 1316.5 170.7 1318.3 171.5 C1320.1 172.3 1321.4 170.5 1323.0 168.0 C1324.6 165.4 1326.1 158.1 1327.7 156.2 C1329.2 154.4 1330.8 156.1 1332.4 156.6 C1333.9 157.2 1335.4 158.7 1337.1 159.4 C1338.8 160.0 1341.0 159.0 1342.5 160.5 C1344.1 162.1 1345.0 166.4 1346.4 168.8 C1347.9 171.1 1349.0 174.2 1351.1 174.6 C1353.2 175.0 1356.7 171.9 1358.9 171.1 C1361.2 170.3 1362.2 171.4 1364.4 169.9 C1366.6 168.5 1370.1 163.2 1372.2 162.5 C1374.3 161.8 1375.0 163.9 1376.9 165.6 C1378.9 167.3 1381.9 173.0 1383.9 172.7 C1386.0 172.3 1387.6 165.9 1389.4 163.3 C1391.2 160.7 1393.2 157.6 1394.9 157.0 C1396.6 156.5 1398.0 158.9 1399.6 160.2 C1401.1 161.5 1402.3 164.3 1404.2 164.8 C1406.2 165.4 1408.8 164.1 1411.3 163.7 C1413.8 163.2 1416.9 163.0 1419.1 162.1 C1421.3 161.2 1422.0 159.2 1424.6 158.2 C1427.2 157.2 1430.8 156.3 1434.7 155.9 C1438.6 155.4 1443.2 155.5 1448.0 155.5 C1452.8 155.5 1457.8 155.8 1463.6 155.9 C1469.5 155.9 1478.9 155.5 1483.2 155.9 C1487.5 156.2 1486.9 157.7 1489.4 158.2 C1491.9 158.7 1495.3 158.3 1498.0 158.6 C1500.7 158.9 1503.5 158.9 1505.8 159.8 C1508.2 160.7 1510.2 163.2 1512.1 164.1 C1513.9 164.9 1514.9 164.0 1516.8 164.8 C1518.6 165.7 1521.3 168.4 1523.0 169.1 C1524.7 169.9 1525.1 169.3 1526.9 169.5 C1528.7 169.8 1531.9 170.6 1533.9 170.7 C1536.0 170.8 1537.5 170.9 1539.4 170.3 C1541.4 169.7 1544.0 167.4 1545.7 167.2 C1547.3 166.9 1547.6 167.0 1549.6 168.8 C1551.5 170.5 1554.1 176.6 1557.4 177.7 C1560.6 178.9 1565.4 177.4 1569.1 175.8 C1572.7 174.2 1577.0 169.0 1579.2 168.0 C1581.5 166.9 1580.6 167.6 1582.4 169.5 C1584.2 171.5 1587.8 179.4 1590.2 179.7 C1592.5 179.9 1595.1 173.0 1596.4 171.1 C1597.7 169.1 1596.7 168.9 1598.0 168.0 C1599.3 167.1 1601.9 166.9 1604.2 165.6 C1606.6 164.4 1609.5 160.6 1612.1 160.5 C1614.7 160.5 1617.8 164.4 1619.9 165.2 C1622.0 166.1 1622.3 166.0 1624.6 165.6 C1626.8 165.3 1630.8 163.4 1633.2 163.3 C1635.5 163.2 1636.9 164.3 1638.6 164.8 C1640.3 165.4 1640.3 166.5 1643.3 166.8 C1646.3 167.1 1653.1 166.2 1656.6 166.8 C1660.1 167.4 1662.5 169.7 1664.4 170.3 C1666.4 170.9 1666.4 171.4 1668.3 170.3 C1670.3 169.2 1673.5 164.7 1676.1 163.7 C1678.7 162.6 1681.3 163.9 1683.9 164.1 C1686.5 164.2 1687.2 164.4 1691.8 164.5 C1696.3 164.5 1706.6 164.7 1711.3 164.5 C1716.0 164.2 1717.7 162.8 1719.9 162.9 C1722.1 163.0 1722.7 163.3 1724.6 164.8 C1726.4 166.4 1728.6 171.5 1730.8 172.3 C1733.0 173.0 1736.7 170.0 1737.8 169.5" fill="none" stroke="#ff7a10" stroke-width="1.3"/><path d="M1151.1 173.4 C1152.2 173.2 1154.9 173.0 1157.4 171.9 C1159.8 170.7 1163.2 166.7 1166.0 166.4 C1168.7 166.1 1171.6 169.5 1173.8 170.3 C1176.0 171.1 1176.9 169.8 1179.2 171.1 C1181.6 172.4 1185.1 177.7 1187.8 178.1 C1190.6 178.5 1193.2 174.5 1195.7 173.4 C1198.1 172.3 1200.2 172.1 1202.7 171.5 C1205.2 170.9 1207.6 170.9 1210.5 169.9 C1213.4 168.9 1216.9 164.9 1219.9 165.6 C1222.9 166.3 1226.1 172.6 1228.5 174.2 C1230.8 175.8 1231.7 174.7 1233.9 175.4 C1236.2 176.1 1239.9 177.7 1241.8 178.5 C1243.6 179.3 1243.1 178.3 1244.9 180.1 C1246.7 181.9 1250.0 189.0 1252.7 189.5 C1255.4 189.9 1259.1 184.1 1261.3 182.8 C1263.5 181.5 1263.8 183.7 1266.0 181.6 C1268.2 179.6 1271.3 170.8 1274.6 170.7 C1277.8 170.6 1282.4 180.9 1285.5 180.9 C1288.6 180.8 1291.2 172.3 1293.3 170.3 C1295.4 168.4 1296.7 169.8 1298.0 169.1 C1299.3 168.5 1299.6 168.7 1301.1 166.4 C1302.7 164.1 1305.3 156.9 1307.4 155.5 C1309.5 154.0 1311.4 157.4 1313.6 157.8 C1315.8 158.3 1318.3 158.6 1320.7 158.2 C1323.0 157.8 1325.7 155.8 1327.7 155.5 C1329.6 155.1 1330.8 155.5 1332.4 156.2 C1333.9 157.0 1335.4 159.1 1337.1 159.8 C1338.8 160.4 1341.0 160.5 1342.5 160.2 C1344.1 159.8 1345.0 158.4 1346.4 157.8 C1347.9 157.2 1349.0 155.7 1351.1 156.6 C1353.2 157.6 1356.7 162.2 1358.9 163.7 C1361.2 165.1 1362.2 164.1 1364.4 165.2 C1366.6 166.3 1369.5 170.4 1372.2 170.3 C1375.0 170.2 1378.1 166.0 1380.8 164.8 C1383.5 163.7 1386.3 163.9 1388.6 163.3 C1391.0 162.7 1393.1 161.0 1394.9 161.3 C1396.7 161.7 1398.0 164.1 1399.6 165.2 C1401.1 166.4 1402.3 168.1 1404.2 168.4 C1406.2 168.6 1408.8 167.3 1411.3 166.8 C1413.8 166.3 1416.9 166.1 1419.1 165.2 C1421.3 164.4 1422.6 162.4 1424.6 161.7 C1426.5 161.0 1428.9 161.9 1430.8 160.9 C1432.8 160.0 1433.4 156.8 1436.3 155.9 C1439.1 154.9 1442.1 155.3 1448.0 155.5 C1453.9 155.6 1463.6 156.6 1471.4 156.6 C1479.2 156.7 1490.2 155.5 1494.9 155.9 C1499.6 156.2 1497.7 157.9 1499.6 158.6 C1501.4 159.2 1503.7 158.9 1505.8 159.8 C1507.9 160.6 1510.2 162.8 1512.1 163.7 C1513.9 164.5 1514.9 164.1 1516.8 164.8 C1518.6 165.6 1521.3 167.7 1523.0 168.4 C1524.7 169.0 1525.1 168.1 1526.9 168.8 C1528.7 169.4 1531.9 171.7 1533.9 172.3 C1536.0 172.9 1537.5 172.5 1539.4 172.3 C1541.4 172.0 1544.0 171.1 1545.7 170.7 C1547.3 170.3 1547.6 171.0 1549.6 169.9 C1551.5 168.9 1554.1 165.0 1557.4 164.5 C1560.6 163.9 1566.5 165.9 1569.1 166.4 C1571.7 166.9 1571.3 166.8 1573.0 167.6 C1574.7 168.4 1577.7 170.8 1579.2 171.1 C1580.8 171.4 1580.6 171.4 1582.4 169.5 C1584.2 167.7 1588.0 160.8 1590.2 160.2 C1592.4 159.5 1594.4 163.2 1595.7 165.6 C1597.0 168.1 1597.0 173.1 1598.0 175.0 C1599.0 176.9 1599.3 176.4 1601.9 177.0 C1604.5 177.5 1610.4 179.5 1613.6 178.1 C1616.9 176.8 1618.6 169.9 1621.4 168.8 C1624.3 167.6 1628.5 170.6 1630.8 171.1 C1633.2 171.6 1633.4 171.0 1635.5 171.9 C1637.6 172.7 1639.7 175.4 1643.3 176.2 C1647.0 177.0 1653.9 177.0 1657.4 176.6 C1660.9 176.1 1662.6 174.1 1664.4 173.4 C1666.2 172.8 1666.5 173.4 1668.3 172.7 C1670.1 171.9 1673.4 169.5 1675.3 168.8 C1677.3 168.0 1677.9 168.8 1680.0 168.0 C1682.1 167.1 1685.2 164.0 1687.8 163.7 C1690.4 163.3 1693.4 165.5 1695.7 166.0 C1697.9 166.5 1698.9 165.8 1701.1 166.8 C1703.3 167.8 1706.9 171.2 1708.9 171.9 C1711.0 172.6 1711.8 171.9 1713.6 171.1 C1715.4 170.3 1716.8 168.0 1719.9 167.2 C1723.0 166.4 1729.4 166.0 1732.4 166.4 C1735.4 166.8 1736.9 169.0 1737.8 169.5" fill="none" stroke="#d0203a" stroke-width="1.3"/></g></svg>
<div class="t" style="left:1129.40px;top:202.32px;font:bold 8.6px/8.6px 'Liberation Sans', sans-serif;color:#3c3c3c;letter-spacing:-0.321px;">60 seconds</div>
<div class="t" style="left:948.50px;width:600px;text-align:center;top:202.32px;font:bold 8.6px/8.6px 'Liberation Sans', sans-serif;color:#3c3c3c;">50</div>
<div class="t" style="left:1046.50px;width:600px;text-align:center;top:202.32px;font:bold 8.6px/8.6px 'Liberation Sans', sans-serif;color:#3c3c3c;">40</div>
<div class="t" style="left:1144.50px;width:600px;text-align:center;top:202.32px;font:bold 8.6px/8.6px 'Liberation Sans', sans-serif;color:#3c3c3c;">30</div>
<div class="t" style="left:1242.50px;width:600px;text-align:center;top:202.32px;font:bold 8.6px/8.6px 'Liberation Sans', sans-serif;color:#3c3c3c;">20</div>
<div class="t" style="left:1340.50px;width:600px;text-align:center;top:202.32px;font:bold 8.6px/8.6px 'Liberation Sans', sans-serif;color:#3c3c3c;">10</div>
<div class="t" style="left:1438.50px;width:600px;text-align:center;top:202.32px;font:bold 8.6px/8.6px 'Liberation Sans', sans-serif;color:#3c3c3c;">0</div>
<div class="t" style="left:1747.70px;top:157.22px;font:bold 8.6px/8.6px 'Liberation Sans', sans-serif;color:#3c3c3c;letter-spacing:-0.413px;">100</div>
<div class="t" style="left:1765.00px;top:157.22px;font:bold 8.6px/8.6px 'Liberation Sans', sans-serif;color:#3c3c3c;">%</div>
<div class="t" style="left:1747.70px;top:176.42px;font:bold 8.6px/8.6px 'Liberation Sans', sans-serif;color:#3c3c3c;letter-spacing:-0.679px;">50</div>
<div class="t" style="left:1760.20px;top:176.42px;font:bold 8.6px/8.6px 'Liberation Sans', sans-serif;color:#3c3c3c;">%</div>
<div class="t" style="left:1747.00px;top:193.32px;font:bold 8.6px/8.6px 'Liberation Sans', sans-serif;color:#3c3c3c;">0</div>
<div class="t" style="left:1755.00px;top:193.32px;font:bold 8.6px/8.6px 'Liberation Sans', sans-serif;color:#3c3c3c;">%</div>
<div class="a" style="left:1179px;top:221px;width:32px;height:17px;background:#ff6f00;border:1px solid #8a3a00;box-shadow:inset 0 0 0 1px rgba(255,255,255,.35);box-sizing:border-box;"></div>
<div class="t" style="left:1217.50px;top:222.30px;font:normal 15px/15px 'Liberation Sans', sans-serif;color:#3c3c3c;letter-spacing:-1.403px;">CPU1</div>
<div class="t" style="left:1259.70px;top:222.30px;font:normal 15px/15px 'Liberation Sans', sans-serif;color:#3c3c3c;letter-spacing:-0.646px;">77.8%</div>
<div class="a" style="left:1388px;top:221px;width:32px;height:17px;background:#d0102a;border:1px solid #7a0a18;box-shadow:inset 0 0 0 1px rgba(255,255,255,.35);box-sizing:border-box;"></div>
<div class="t" style="left:1426.50px;top:222.30px;font:normal 15px/15px 'Liberation Sans', sans-serif;color:#3c3c3c;letter-spacing:-1.403px;">CPU2</div>
<div class="t" style="left:1468.50px;top:222.30px;font:normal 15px/15px 'Liberation Sans', sans-serif;color:#3c3c3c;letter-spacing:-0.646px;">40.8%</div>
<div class="a" style="left:1596px;top:221px;width:32px;height:17px;background:#3aa02a;border:1px solid #1a5010;box-shadow:inset 0 0 0 1px rgba(255,255,255,.35);box-sizing:border-box;"></div>
<div class="t" style="left:1634.50px;top:222.30px;font:normal 15px/15px 'Liberation Sans', sans-serif;color:#3c3c3c;letter-spacing:-1.403px;">CPU3</div>
<div class="t" style="left:1675.50px;top:222.30px;font:normal 15px/15px 'Liberation Sans', sans-serif;color:#3c3c3c;letter-spacing:-0.497px;">0.0%</div>
<div class="t" style="left:1122.50px;top:252.41px;font:bold 14.4px/14.4px 'Liberation Sans', sans-serif;color:#3c3c3c;letter-spacing:0.221px;">Memory and Swap History</div>
<svg class="a" style="left:1140px;top:278.5px" width="620" height="63.5" viewBox="1140 278.5 620 63.5"><rect x="1150.5" y="284.0" width="588.0" height="38.5" fill="#fff"/><path d="M1248.5 283.5V322.5" stroke="#dcdcdc" stroke-width="1"/><path d="M1346.5 283.5V322.5" stroke="#dcdcdc" stroke-width="1"/><path d="M1444.5 283.5V322.5" stroke="#dcdcdc" stroke-width="1"/><path d="M1542.5 283.5V322.5" stroke="#dcdcdc" stroke-width="1"/><path d="M1640.5 283.5V322.5" stroke="#dcdcdc" stroke-width="1"/><path d="M1150.5 303.5H1738.5" stroke="#dcdcdc" stroke-width="1"/><path d="M1150.5 284.0H1742.5M1150.5 283.5V326M1738.5 283.5V326M1150.5 322.5H1742.5M1738.5 303.5H1742.5" stroke="#9a9a9a" stroke-width="1" fill="none"/><path d="M1151 321.5H1738" stroke="#c8407a" stroke-width="1.3"/></svg>
<div class="t" style="left:1129.40px;top:328.92px;font:bold 8.6px/8.6px 'Liberation Sans', sans-serif;color:#3c3c3c;letter-spacing:-0.321px;">60 seconds</div>
<div class="t" style="left:948.50px;width:600px;text-align:center;top:328.92px;font:bold 8.6px/8.6px 'Liberation Sans', sans-serif;color:#3c3c3c;">50</div>
<div class="t" style="left:1046.50px;width:600px;text-align:center;top:328.92px;font:bold 8.6px/8.6px 'Liberation Sans', sans-serif;color:#3c3c3c;">40</div>
<div class="t" style="left:1144.50px;width:600px;text-align:center;top:328.92px;font:bold 8.6px/8.6px 'Liberation Sans', sans-serif;color:#3c3c3c;">30</div>
<div class="t" style="left:1242.50px;width:600px;text-align:center;top:328.92px;font:bold 8.6px/8.6px 'Liberation Sans', sans-serif;color:#3c3c3c;">20</div>
<div class="t" style="left:1340.50px;width:600px;text-align:center;top:328.92px;font:bold 8.6px/8.6px 'Liberation Sans', sans-serif;color:#3c3c3c;">10</div>
<div class="t" style="left:1438.50px;width:600px;text-align:center;top:328.92px;font:bold 8.6px/8.6px 'Liberation Sans', sans-serif;color:#3c3c3c;">0</div>
<div class="t" style="left:1747.70px;top:284.22px;font:bold 8.6px/8.6px 'Liberation Sans', sans-serif;color:#3c3c3c;letter-spacing:-0.413px;">100</div>
<div class="t" style="left:1765.00px;top:284.22px;font:bold 8.6px/8.6px 'Liberation Sans', sans-serif;color:#3c3c3c;">%</div>
<div class="t" style="left:1747.70px;top:303.22px;font:bold 8.6px/8.6px 'Liberation Sans', sans-serif;color:#3c3c3c;letter-spacing:-0.679px;">50</div>
<div class="t" style="left:1760.20px;top:303.22px;font:bold 8.6px/8.6px 'Liberation Sans', sans-serif;color:#3c3c3c;">%</div>
<div class="t" style="left:1747.00px;top:320.22px;font:bold 8.6px/8.6px 'Liberation Sans', sans-serif;color:#3c3c3c;">0</div>
<div class="t" style="left:1755.00px;top:320.22px;font:bold 8.6px/8.6px 'Liberation Sans', sans-serif;color:#3c3c3c;">%</div>
<svg class="a" style="left:1176px;top:352px" width="34" height="34" viewBox="0 0 34 34"><circle cx="16.5" cy="16.5" r="15" fill="none" stroke="#c8c6c2" stroke-width="1"/><path d="M16.5 17L17.5 5.5L19.5 6.5Z" fill="#b8204a" stroke="#6a1028" stroke-width=".6"/><circle cx="16.5" cy="16.5" r="3.8" fill="#c02050" stroke="#6a1028" stroke-width="1"/></svg>
<div class="t" style="left:1214.40px;top:349.20px;font:normal 15px/15px 'Liberation Sans', sans-serif;color:#3c3c3c;letter-spacing:0.305px;">Memory</div>
<div class="t" style="left:1214.40px;top:371.70px;font:normal 15px/15px 'Liberation Sans', sans-serif;color:#3c3c3c;letter-spacing:-0.354px;">261.5 MiB (3.2%) of 7.9 GiB</div>
<svg class="a" style="left:1536px;top:352px" width="34" height="34" viewBox="0 0 34 34"><circle cx="16.5" cy="16.5" r="15" fill="none" stroke="#c8c6c2" stroke-width="1"/><circle cx="16.5" cy="16.5" r="4.2" fill="#a0a09c" stroke="#4a4a48" stroke-width="1.2"/></svg>
<div class="t" style="left:1574.40px;top:349.20px;font:normal 15px/15px 'Liberation Sans', sans-serif;color:#3c3c3c;letter-spacing:-0.630px;">Swap</div>
<div class="t" style="left:1574.40px;top:371.70px;font:normal 15px/15px 'Liberation Sans', sans-serif;color:#3c3c3c;letter-spacing:0.098px;">not available</div>
<div class="t" style="left:1122.50px;top:401.81px;font:bold 14.4px/14.4px 'Liberation Sans', sans-serif;color:#3c3c3c;letter-spacing:0.543px;">Network History</div>
<svg class="a" style="left:1140px;top:428.5px" width="620" height="62.5" viewBox="1140 428.5 620 62.5"><rect x="1150.5" y="434.0" width="588.0" height="37.5" fill="#fff"/><path d="M1248.5 433.5V471.5" stroke="#dcdcdc" stroke-width="1"/><path d="M1346.5 433.5V471.5" stroke="#dcdcdc" stroke-width="1"/><path d="M1444.5 433.5V471.5" stroke="#dcdcdc" stroke-width="1"/><path d="M1542.5 433.5V471.5" stroke="#dcdcdc" stroke-width="1"/><path d="M1640.5 433.5V471.5" stroke="#dcdcdc" stroke-width="1"/><path d="M1150.5 452.5H1738.5" stroke="#dcdcdc" stroke-width="1"/><path d="M1150.5 434.0H1742.5M1150.5 433.5V475M1738.5 433.5V475M1150.5 471.5H1742.5M1738.5 452.5H1742.5" stroke="#9a9a9a" stroke-width="1" fill="none"/><path d="M1151 470.3H1308C1312 470.3 1314 447.8 1318 447.8C1322 447.8 1324 470.3 1328 470.3H1738" fill="none" stroke="#3a7ab0" stroke-width="1.5"/><path d="M1309 470.3C1314 468.5 1322 468.5 1327 470.3" fill="none" stroke="#e02020" stroke-width="1.3"/></svg>
<div class="t" style="left:1129.40px;top:478.32px;font:bold 8.6px/8.6px 'Liberation Sans', sans-serif;color:#3c3c3c;letter-spacing:-0.321px;">60 seconds</div>
<div class="t" style="left:948.50px;width:600px;text-align:center;top:478.32px;font:bold 8.6px/8.6px 'Liberation Sans', sans-serif;color:#3c3c3c;">50</div>
<div class="t" style="left:1046.50px;width:600px;text-align:center;top:478.32px;font:bold 8.6px/8.6px 'Liberation Sans', sans-serif;color:#3c3c3c;">40</div>
<div class="t" style="left:1144.50px;width:600px;text-align:center;top:478.32px;font:bold 8.6px/8.6px 'Liberation Sans', sans-serif;color:#3c3c3c;">30</div>
<div class="t" style="left:1242.50px;width:600px;text-align:center;top:478.32px;font:bold 8.6px/8.6px 'Liberation Sans', sans-serif;color:#3c3c3c;">20</div>
<div class="t" style="left:1340.50px;width:600px;text-align:center;top:478.32px;font:bold 8.6px/8.6px 'Liberation Sans', sans-serif;color:#3c3c3c;">10</div>
<div class="t" style="left:1438.50px;width:600px;text-align:center;top:478.32px;font:bold 8.6px/8.6px 'Liberation Sans', sans-serif;color:#3c3c3c;">0</div>
<div class="t" style="left:1747.80px;top:434.72px;font:bold 8.6px/8.6px 'Liberation Sans', sans-serif;color:#3c3c3c;letter-spacing:-0.169px;">200.0 KiB/s</div>
<div class="t" style="left:1747.80px;top:452.72px;font:bold 8.6px/8.6px 'Liberation Sans', sans-serif;color:#3c3c3c;letter-spacing:-0.215px;">100.0 KiB/s</div>
<div class="t" style="left:1747.80px;top:468.72px;font:bold 8.6px/8.6px 'Liberation Sans', sans-serif;color:#3c3c3c;letter-spacing:-0.256px;">0.0 KiB/s</div>
<svg class="a" style="left:1182px;top:502px" width="32" height="34" viewBox="0 0 32 34"><ellipse cx="16" cy="30" rx="13" ry="3" fill="#000" opacity=".12"/><defs><linearGradient id="ag" x1="0" y1="0" x2="1" y2="1"><stop offset="0" stop-color="#6aaad8"/><stop offset=".5" stop-color="#2f7ab8"/><stop offset="1" stop-color="#2a70a8"/></linearGradient></defs><path d="M9.5 2.5H22.5V14H29.5L16 28.5L2.5 14H9.5Z" fill="url(#ag)" stroke="#123a5c" stroke-width="1.3"/><path d="M11 4H21V15.5H26L16 26.3L6 15.5H11Z" fill="none" stroke="#9ac8ea" stroke-width=".8" opacity=".7"/></svg>
<div class="t" style="left:1226.60px;top:498.90px;font:normal 15px/15px 'Liberation Sans', sans-serif;color:#3c3c3c;letter-spacing:-0.374px;">Receiving</div>
<div class="t" style="left:1226.60px;top:523.30px;font:normal 15px/15px 'Liberation Sans', sans-serif;color:#3c3c3c;letter-spacing:-0.170px;">Total Received</div>
<div class="t" style="right:473.10px;top:498.90px;font:normal 15px/15px 'Liberation Sans', sans-serif;color:#3c3c3c;">0 bytes/s</div>
<div class="t" style="right:473.80px;top:523.30px;font:normal 15px/15px 'Liberation Sans', sans-serif;color:#3c3c3c;">10.7 MiB</div>
<svg class="a" style="left:1514px;top:502px" width="32" height="34" viewBox="0 0 32 34"><ellipse cx="16" cy="30" rx="13" ry="3" fill="#000" opacity=".12"/><defs><linearGradient id="rg" x1="0" y1="0" x2="1" y2="1"><stop offset="0" stop-color="#ff7a60"/><stop offset=".5" stop-color="#e82a0c"/><stop offset="1" stop-color="#d02008"/></linearGradient></defs><path d="M9.5 28.5H22.5V17H29.5L16 2.5L2.5 17H9.5Z" fill="url(#rg)" stroke="#7a1006" stroke-width="1.3"/><path d="M11 27H21V15.5H26L16 4.7L6 15.5H11Z" fill="none" stroke="#ffb0a0" stroke-width=".8" opacity=".6"/></svg>
<div class="t" style="left:1558.40px;top:498.90px;font:normal 15px/15px 'Liberation Sans', sans-serif;color:#3c3c3c;letter-spacing:-0.221px;">Sending</div>
<div class="t" style="left:1558.40px;top:523.30px;font:normal 15px/15px 'Liberation Sans', sans-serif;color:#3c3c3c;letter-spacing:-0.021px;">Total Sent</div>
<div class="t" style="left:1689.00px;top:498.90px;font:normal 15px/15px 'Liberation Sans', sans-serif;color:#3c3c3c;letter-spacing:0.052px;">0 bytes/s</div>
<div class="t" style="left:1689.00px;top:523.30px;font:normal 15px/15px 'Liberation Sans', sans-serif;color:#3c3c3c;letter-spacing:-0.450px;">387.6 KiB</div>
<div class="a" style="left:1110px;top:552px;width:700px;height:5px;background:linear-gradient(#8a8a8a,#fafafa 30%,#9a9a9a);"></div>
<div class="a" style="left:690px;top:369px;width:379px;height:490px;background:#fff;border:1px solid #4a4a4a;box-sizing:border-box;"></div>
<div class="a" style="left:691px;top:370px;width:377px;height:25px;background:linear-gradient(#f2f2f2,#dcdcdc);"></div>
<div class="a" style="left:691px;top:394.5px;width:377px;height:1px;background:#5a5a5a;"></div>
<div class="a" style="left:698px;top:374px;width:17px;height:15px;background:linear-gradient(#fae6d6 30%,#fbdcdc 30%,#f8d0d0);border:1px solid #eedcd0;box-sizing:border-box;"></div>
<div class="t" style="left:832.00px;top:374.25px;font:bold 16px/16px 'Liberation Sans', sans-serif;color:#555555;letter-spacing:0.668px;">lstopo</div>
<svg class="a" style="left:1003.4px;top:375.8px" width="55.89999999999998" height="12">
<path d="M1 6H11" stroke="#606060" stroke-width="1.6"/>
<path d="M23.600000000000023 6H33.60000000000002M28.600000000000023 1V11" stroke="#606060" stroke-width="1.6"/>
<path d="M45.39999999999998 1.5L54.39999999999998 10.5M54.39999999999998 1.5L45.39999999999998 10.5" stroke="#606060" stroke-width="1.6"/>
</svg>
<div class="t" style="left:701.00px;top:405.94px;font:normal 10.7px/10.7px 'Liberation Sans', sans-serif;color:#000;letter-spacing:0.007px;">Machine (8051MB)</div>
<div class="a" style="left:700px;top:424px;width:208px;height:32px;background:#fff;border:2px solid #666;border-radius:1.5px;box-sizing:border-box;"></div>
<div class="t" style="left:711.40px;top:435.64px;font:normal 10.7px/10.7px 'Liberation Sans', sans-serif;color:#000;letter-spacing:0.014px;">L2 (256KB)</div>
<div class="a" style="left:916px;top:434px;width:13px;height:12px;background:#fff;border:2px solid #666;border-radius:1.5px;box-sizing:border-box;"></div>
<div class="a" style="left:929px;top:439.5px;width:37px;height:1.2px;background:#666;"></div>
<div class="a" style="left:966px;top:424px;width:93px;height:32px;background:#c2d59b;border:2px solid #666;border-radius:1.5px;box-sizing:border-box;"></div>
<div class="t" style="left:977.50px;top:435.64px;font:normal 10.7px/10.7px 'Liberation Sans', sans-serif;color:#000;letter-spacing:0.153px;">PCI 1957:0111</div>
<div class="a" style="left:700px;top:464px;width:100px;height:192px;background:#dedede;border:2px solid #666;border-radius:1.5px;box-sizing:border-box;"></div>
<div class="t" style="left:711.40px;top:475.94px;font:normal 10.7px/10.7px 'Liberation Sans', sans-serif;color:#000;letter-spacing:-0.070px;">Package</div>
<div class="a" style="left:710px;top:494px;width:80px;height:32px;background:#fff;border:2px solid #666;border-radius:1.5px;box-sizing:border-box;"></div>
<div class="t" style="left:721.50px;top:505.64px;font:normal 10.7px/10.7px 'Liberation Sans', sans-serif;color:#000;letter-spacing:0.004px;">L1d (32KB)</div>
<div class="a" style="left:710px;top:534px;width:80px;height:32px;background:#fff;border:2px solid #666;border-radius:1.5px;box-sizing:border-box;"></div>
<div class="t" style="left:721.50px;top:545.64px;font:normal 10.7px/10.7px 'Liberation Sans', sans-serif;color:#000;letter-spacing:-0.059px;">L1i (32KB)</div>
<div class="a" style="left:710px;top:574px;width:80px;height:72px;background:#bebebe;border:2px solid #666;border-radius:1.5px;box-sizing:border-box;"></div>
<div class="t" style="left:721.40px;top:585.64px;font:normal 10.7px/10.7px 'Liberation Sans', sans-serif;color:#000;letter-spacing:0.394px;">Core P#0</div>
<div class="a" style="left:720px;top:604px;width:60px;height:32px;background:#fff;border:2px solid #666;border-radius:1.5px;box-sizing:border-box;"></div>
<div class="t" style="left:731.00px;top:615.64px;font:normal 10.7px/10.7px 'Liberation Sans', sans-serif;color:#000;letter-spacing:0.495px;">PU P#0</div>
<div class="a" style="left:808px;top:464px;width:100px;height:192px;background:#dedede;border:2px solid #666;border-radius:1.5px;box-sizing:border-box;"></div>
<div class="t" style="left:819.40px;top:475.94px;font:normal 10.7px/10.7px 'Liberation Sans', sans-serif;color:#000;letter-spacing:-0.070px;">Package</div>
<div class="a" style="left:818px;top:494px;width:80px;height:32px;background:#fff;border:2px solid #666;border-radius:1.5px;box-sizing:border-box;"></div>
<div class="t" style="left:829.50px;top:505.64px;font:normal 10.7px/10.7px 'Liberation Sans', sans-serif;color:#000;letter-spacing:0.004px;">L1d (32KB)</div>
<div class="a" style="left:818px;top:534px;width:80px;height:32px;background:#fff;border:2px solid #666;border-radius:1.5px;box-sizing:border-box;"></div>
<div class="t" style="left:829.50px;top:545.64px;font:normal 10.7px/10.7px 'Liberation Sans', sans-serif;color:#000;letter-spacing:-0.059px;">L1i (32KB)</div>
<div class="a" style="left:818px;top:574px;width:80px;height:72px;background:#bebebe;border:2px solid #666;border-radius:1.5px;box-sizing:border-box;"></div>
<div class="t" style="left:829.40px;top:585.64px;font:normal 10.7px/10.7px 'Liberation Sans', sans-serif;color:#000;letter-spacing:0.394px;">Core P#0</div>
<div class="a" style="left:828px;top:604px;width:60px;height:32px;background:#fff;border:2px solid #666;border-radius:1.5px;box-sizing:border-box;"></div>
<div class="t" style="left:839.00px;top:615.64px;font:normal 10.7px/10.7px 'Liberation Sans', sans-serif;color:#000;letter-spacing:0.495px;">PU P#1</div>
<div class="a" style="left:700px;top:674px;width:12px;height:12px;background:#fff;border:2px solid #666;border-radius:1.5px;box-sizing:border-box;"></div>
<div class="a" style="left:712px;top:679.5px;width:38px;height:1.2px;background:#666;"></div>
<div class="a" style="left:750px;top:664px;width:155px;height:112px;background:#c2d59b;border:2px solid #666;border-radius:1.5px;box-sizing:border-box;"></div>
<div class="t" style="left:761.40px;top:675.64px;font:normal 10.7px/10.7px 'Liberation Sans', sans-serif;color:#000;letter-spacing:0.144px;">PCI 1002:683f</div>
<div class="a" style="left:760px;top:694px;width:48px;height:32px;background:#dedede;border:2px solid #666;border-radius:1.5px;box-sizing:border-box;"></div>
<div class="t" style="left:771.50px;top:705.64px;font:normal 10.7px/10.7px 'Liberation Sans', sans-serif;color:#000;letter-spacing:0.073px;">card0</div>
<div class="a" style="left:816px;top:694px;width:79px;height:32px;background:#dedede;border:2px solid #666;border-radius:1.5px;box-sizing:border-box;"></div>
<div class="t" style="left:827.50px;top:705.64px;font:normal 10.7px/10.7px 'Liberation Sans', sans-serif;color:#000;letter-spacing:0.096px;">renderD128</div>
<div class="a" style="left:760px;top:734px;width:74px;height:32px;background:#dedede;border:2px solid #666;border-radius:1.5px;box-sizing:border-box;"></div>
<div class="t" style="left:771.50px;top:745.64px;font:normal 10.7px/10.7px 'Liberation Sans', sans-serif;color:#000;letter-spacing:0.102px;">controlD64</div>
<div class="a" style="left:691px;top:784px;width:377px;height:1.5px;background:#444;"></div>
<div class="t" style="left:701.00px;top:795.94px;font:normal 10.7px/10.7px 'Liberation Sans', sans-serif;color:#000;letter-spacing:0.132px;">Host: Tabor</div>
<div class="t" style="left:701.00px;top:815.84px;font:normal 10.7px/10.7px 'Liberation Sans', sans-serif;color:#000;letter-spacing:0.019px;">Indexes: physical</div>
<div class="t" style="left:701.00px;top:835.84px;font:normal 10.7px/10.7px 'Liberation Sans', sans-serif;color:#000;letter-spacing:0.020px;">Date: Sat 15 Feb 2025 06:05:57 AM AST</div>
<div class="a" style="left:691px;top:854px;width:377px;height:5px;background:linear-gradient(#555,#fafafa 30%,#8a8a8a);"></div>
<div class="a" style="left:0px;top:1056px;width:1920px;height:24px;background:linear-gradient(#f4f4f4,#dcdcdc);border-top:1px solid #fff;box-sizing:border-box;"></div>
<div class="a" style="left:0px;top:1056px;width:48px;height:24px;background:linear-gradient(#9ccaf0,#4a90d0 50%,#1f64a8);"></div>
<svg class="a" style="left:12px;top:1057px" width="23" height="22" viewBox="0 0 23 22"><defs><linearGradient id="lg1" x1="0" y1="0" x2="0" y2="1"><stop offset="0" stop-color="#ffffff"/><stop offset=".6" stop-color="#d8e8f4"/><stop offset="1" stop-color="#8ab4d8"/></linearGradient></defs><circle cx="11.3" cy="10.9" r="10" fill="url(#lg1)" stroke="#2a5a8a" stroke-width=".6"/><path d="M2.5 15C6 9 10 5 14.5 3.5L16.5 2.8L15.8 4.5C17.5 8 18 13 19 17L17.8 17.3C16.5 12 15 8.5 13.5 6.5C10 9 6.5 13 3.8 17.5Z" fill="#2f6aa0"/><path d="M4 17L9 11M5.5 18.5L10 13M7 19.5L11 14.5" stroke="#2f6aa0" stroke-width=".8"/></svg>
<svg class="a" style="left:57px;top:1057px" width="22" height="22" viewBox="0 0 22 22"><path d="M1.5 2.5h6l1.5 1.5h6.5v17h-14z" fill="#f4f4f4" stroke="#999" stroke-width=".8"/><rect x="3.5" y="5" width="17" height="16" rx="1" fill="#7aaee0" stroke="#4a7ab0" stroke-width=".8"/><rect x="4.3" y="5.8" width="15.4" height="6" fill="#a8ccf0" opacity=".6"/><path d="M13.5 10L19 15.5H16.3L17.5 19L16 19.6L14.8 16L13 17.8Z" fill="#fff" stroke="#444" stroke-width=".7"/></svg>
<svg class="a" style="left:84px;top:1057px" width="22" height="22" viewBox="0 0 22 22"><defs><linearGradient id="wg" x1="0" y1="0" x2="0" y2="1"><stop offset="0" stop-color="#0a2a48"/><stop offset=".5" stop-color="#2a7ab0"/><stop offset="1" stop-color="#3a9ad0"/></linearGradient></defs><rect x="0.6" y="0.6" width="20.8" height="20.8" rx="2" fill="url(#wg)" stroke="#1a3a60" stroke-width="1.2"/><path d="M2 7c2-2 5-2 6 0c1 3-2 4-3 6l-1 3c-2-2-2-6-2-9zM9 6c3-1 8-1 11 1v5c-2 0-3 2-4 4c-1-2-3-2-3-5c-2 0-3-2-4-5z" fill="#e4f0f8" opacity=".9"/><path d="M1 14H21M1 18H21M7 1V21M14 1V21" stroke="#8ac8f0" stroke-width=".5" opacity=".6"/></svg>
<svg class="a" style="left:112px;top:1057px" width="22" height="22" viewBox="0 0 22 22"><rect x="0.8" y="0.8" width="20.4" height="20.4" rx="2" fill="#f2f2f2" stroke="#777" stroke-width="1.2"/><rect x="1.5" y="1.5" width="19" height="4.5" fill="#6aa0d8"/><rect x="11.5" y="2.5" width="2.3" height="2.3" fill="#dfe8f0"/><rect x="14.5" y="2.5" width="2.3" height="2.3" fill="#dfe8f0"/><rect x="17.5" y="2.5" width="2.3" height="2.3" fill="#dfe8f0"/><path d="M2 17.5H20" stroke="#777" stroke-width="1"/></svg>
<div class="a" style="left:141px;top:1058px;width:35px;height:20px;background:#6c98c0;"></div>
<svg class="a" style="left:141px;top:1058px" width="35" height="20" viewBox="0 0 35 20"><rect x="1" y="1" width="13" height="8" fill="#9cc0e0"/><rect x="18" y="1.5" width="15" height="8" fill="#9cc0e0" stroke="#fff" stroke-width="1.2"/><rect x="2" y="12" width="13" height="7" fill="#9cc0e0" stroke="#fff" stroke-width="1.2"/><rect x="13" y="8" width="8" height="9" fill="#c4dcf0" stroke="#fff" stroke-width="1.2"/><rect x="20" y="12" width="12" height="6" fill="#9cc0e0"/></svg>
<div class="a" style="left:177.5px;top:1058px;width:35px;height:20px;background:#bcb8b0;"></div>
<svg class="a" style="left:223px;top:1058px" width="18" height="19" viewBox="0 0 18 19"><rect x="0" y="0" width="18" height="19" rx="2" fill="#3a6a2a"/><rect x="0" y="0" width="18" height="19" rx="2" fill="url(#tg)"/><defs><linearGradient id="tg" x1="0" x2="1"><stop offset="0" stop-color="#1a3010"/><stop offset="1" stop-color="#7ab050"/></linearGradient></defs><path d="M3 4l3 2l-3 2M6 9h3" stroke="#fff" stroke-width="1" fill="none"/></svg>
<div class="t" style="left:243.30px;top:1060.30px;font:normal 15px/15px 'Liberation Sans', sans-serif;color:#222;letter-spacing:0.101px;">root@Tabor: ~</div>
<svg class="a" style="left:375px;top:1059px" width="17" height="16" viewBox="0 0 18 16"><path d="M1 2h3v3h5v-3h2v3l5 1v3l-4 1v5H3V9H1z" fill="#888"/><rect x="3" y="8" width="8" height="7" fill="#a8c020" stroke="#6a8010" stroke-width=".8"/></svg>
<div class="t" style="left:394.00px;top:1060.30px;font:normal 15px/15px 'Liberation Sans', sans-serif;color:#222;letter-spacing:-0.275px;">Summary - Syst...</div>
<svg class="a" style="left:525px;top:1059px" width="18" height="18" viewBox="0 0 18 18"><rect x="0.5" y="0.5" width="17" height="17" rx="2.5" fill="#1a3a3a" stroke="#333"/><path d="M1.5 9H6L7.5 6.5L9.5 11L11 8.5H16.5" fill="none" stroke="#30e0e8" stroke-width="1.3"/></svg>
<div class="t" style="left:545.00px;top:1060.30px;font:normal 15px/15px 'Liberation Sans', sans-serif;color:#222;letter-spacing:0.129px;">System Monitor</div>
<div class="a" style="left:673px;top:1057px;width:146px;height:23px;background:linear-gradient(#dadada,#9a9a9a);"></div>
<div class="a" style="left:677px;top:1061px;width:18px;height:15px;background:linear-gradient(#d8c4b4 30%,#f4d8d8 30%,#eec4c4);"></div>
<div class="t" style="left:697.30px;top:1060.30px;font:normal 15px/15px 'Liberation Sans', sans-serif;color:#f4f4f4;letter-spacing:0.496px;">lstopo</div>
<svg class="a" style="left:1761px;top:1060px" width="21" height="18" viewBox="0 0 21 18"><path d="M0.5 6H4L9 1.5V16.5L4 12H0.5Z" fill="#666"/><path d="M12 6c1 1.5 1 4.5 0 6M14.5 3.5c2 3 2 8 0 11M17.5 1c3 4.5 3 11.5 0 16" fill="none" stroke="#666" stroke-width="1.5"/></svg>
<svg class="a" style="left:1787px;top:1057px" width="19" height="22" viewBox="0 0 19 22"><rect x="5.5" y="0.5" width="8" height="3" rx="1" fill="#eee" stroke="#999" stroke-width=".6"/><rect x="0.5" y="3" width="18" height="18.5" rx="1.5" fill="#222" stroke="#111"/><rect x="1" y="3.5" width="17" height="8" fill="#c87048"/><rect x="1" y="3.5" width="17" height="8" fill="url(#bt)"/><defs><linearGradient id="bt" x1="0" x2="1"><stop offset="0" stop-color="#000" stop-opacity=".3"/><stop offset=".5" stop-color="#fff" stop-opacity=".35"/><stop offset="1" stop-color="#000" stop-opacity=".3"/></linearGradient></defs></svg>
<svg class="a" style="left:1821px;top:1057px" width="22" height="22" viewBox="0 0 22 22"><rect x="9.5" y="1.5" width="11" height="8" rx="1" fill="#fff" stroke="#666" stroke-width="1.6"/><rect x="1" y="12.5" width="11" height="8" rx="1" fill="#fff" stroke="#666" stroke-width="1.6"/><path d="M15 9.5V15H12" fill="none" stroke="#666" stroke-width="1.6"/></svg>
<div class="t" style="left:1855.80px;top:1060.65px;font:normal 14px/14px 'Liberation Sans', sans-serif;color:#111;letter-spacing:0.033px;">06:06</div>
<svg class="a" style="left:1899px;top:1059px" width="18" height="19" viewBox="0 0 18 19"><path d="M5 4.5A7 7 0 1 0 13 4.5" fill="none" stroke="#666" stroke-width="1.6"/><path d="M9 1V9" stroke="#666" stroke-width="1.6"/></svg></body></html>
